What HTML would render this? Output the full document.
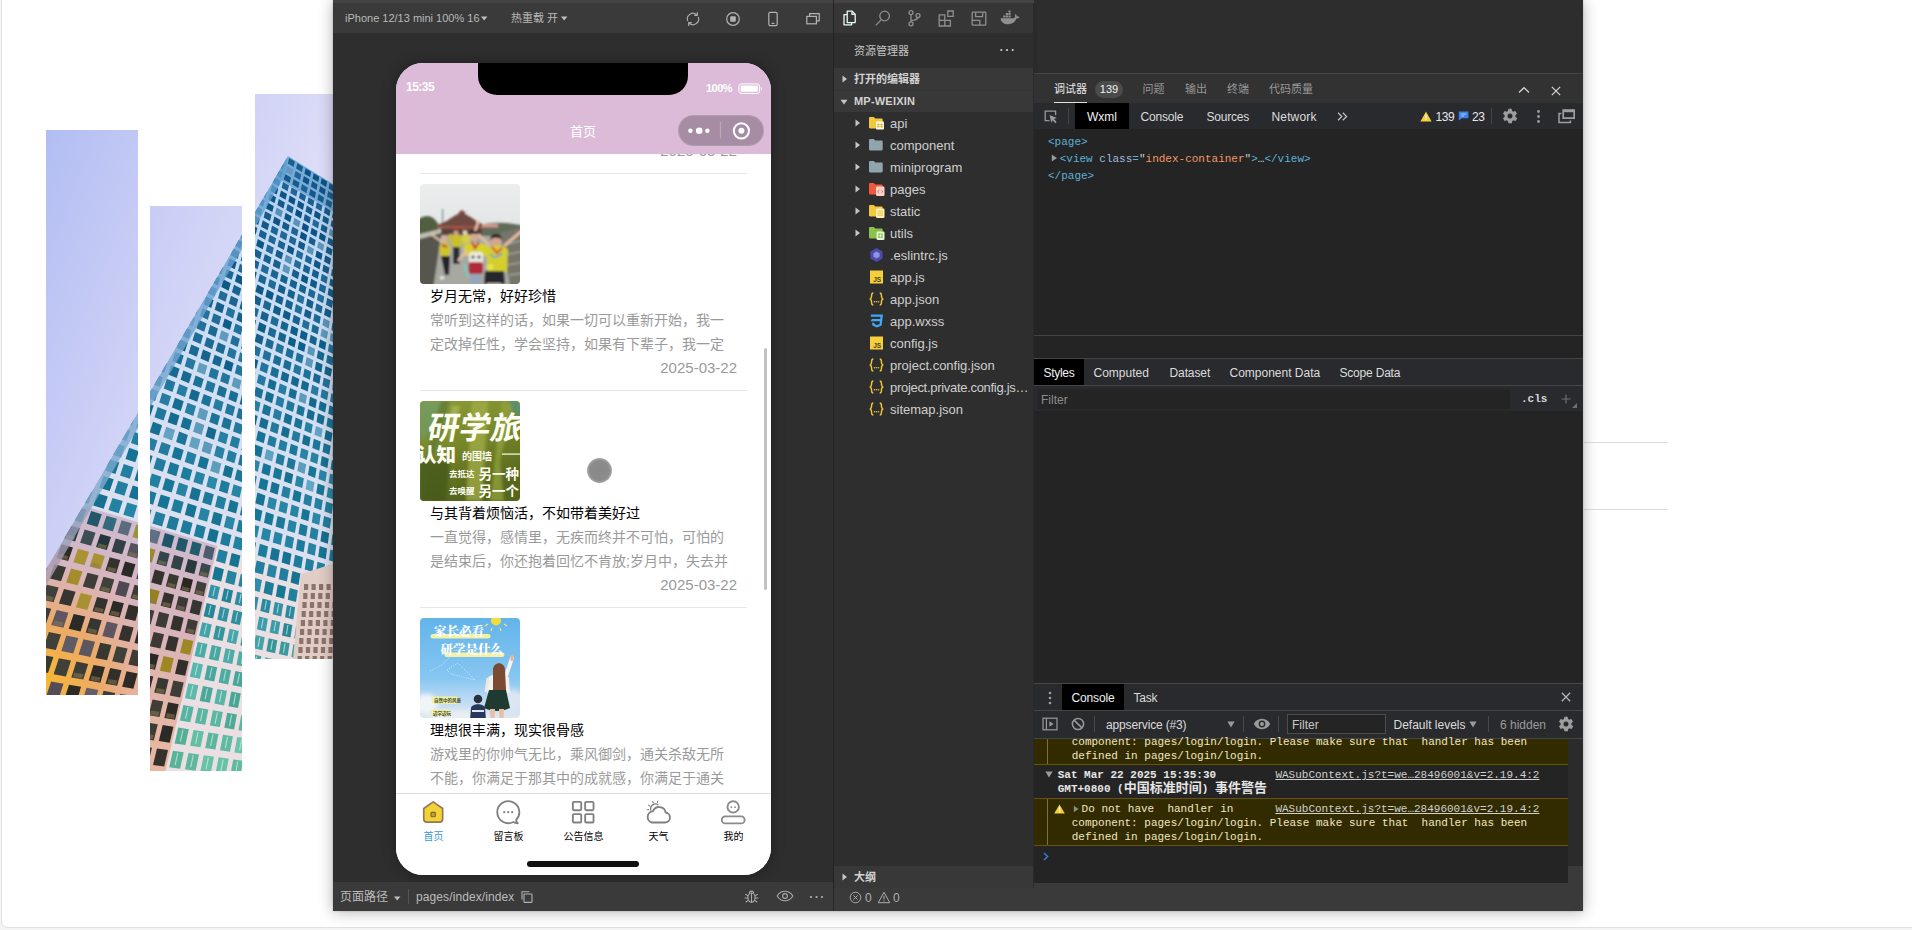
<!DOCTYPE html>
<html lang="zh-CN">
<head>
<meta charset="utf-8">
<title>微信开发者工具 - 首页</title>
<style>
*{box-sizing:border-box}
html,body{margin:0;padding:0}
body{width:1912px;height:930px;overflow:hidden;position:relative;background:#f4f4f4;font-family:"Liberation Sans","Noto Sans CJK SC",sans-serif;-webkit-font-smoothing:antialiased}
.abs{position:absolute}
#card{position:absolute;left:1px;top:-12px;width:1930px;height:940px;background:#fff;border:1px solid #e0e0e0;border-radius:7px}
#ide{position:absolute;left:333px;top:0;width:1250px;height:911px;background:#2e2e2e;box-shadow:0 1px 14px rgba(0,0,0,.3),0 0 2px rgba(0,0,0,.2);overflow:hidden;color:#ccc;font-size:12px}
.t{position:absolute;white-space:nowrap;line-height:1}
.ui{font-family:"Liberation Sans","Noto Sans CJK SC",sans-serif}
.mono{font-family:"Liberation Mono","Noto Sans CJK SC",monospace}
/* simulator */
#simbar{position:absolute;left:0;top:3px;width:500px;height:30px;background:#3a3a3a}
#simfoot{position:absolute;left:0;top:882px;width:500px;height:29px;background:#3a3a3a}
#phone{position:absolute;left:63px;top:63px;width:375px;height:812px;background:#fff;border-radius:27px;overflow:hidden;box-shadow:0 0 14px rgba(0,0,0,.35)}
#nav{position:absolute;left:0;top:0;width:375px;height:91px;background:#dcbbd9}
#notch{position:absolute;left:81.5px;top:0;width:210.5px;height:32px;background:#000;border-radius:0 0 19px 19px}
#list{position:absolute;left:0;top:91px;width:375px;height:640px;overflow:hidden}
.item{position:absolute;left:24px;width:327px;height:217px;border-bottom:1px solid #e6e6e6}
.item .pic{position:absolute;left:0;top:10px;width:100px;height:100px;border-radius:4px;overflow:hidden}
.item .tt{position:absolute;left:10px;top:110px;height:24px;line-height:24px;font-size:14px;color:#000;white-space:nowrap}
.item .ds{position:absolute;left:10px;top:134px;width:308px;line-height:24px;font-size:14px;color:#9a9a9a;white-space:nowrap}
.item .dt{position:absolute;right:10px;top:182px;height:24px;line-height:24px;font-size:15px;color:#9a9a9a;white-space:nowrap}
#tabbar{position:absolute;left:0;top:730px;width:375px;height:82px;background:#fff;border-top:1px solid #dcdcdc}
.tab{position:absolute;top:0;width:75px;height:60px;text-align:center}
.tab svg{position:absolute;left:24.300px;top:4.800px}
.tab span{position:absolute;left:0;width:75px;top:37px;font-size:10px;line-height:12px;color:#000}
/* side bar */
#side{position:absolute;left:500px;top:0;width:201px;height:911px;border-left:1px solid #232323}
.row{position:absolute;left:0;width:200px;height:22px}
.row .nm{position:absolute;left:56px;top:1px;line-height:22px;font-size:13px;color:#cfcfcf;white-space:nowrap}
.row .ar{position:absolute;left:20px;top:7px}
.row .ic{position:absolute;left:34px;top:3px}
/* devtools */
#dbg{position:absolute;left:701px;top:0;width:549px;height:911px;background:#2d2d2d}
.dt12{font-size:12px;color:#dcdcdc}
.sep{position:absolute;width:1px;background:#4a4a4a}
.hl{position:absolute;left:0;width:549px;height:1px;background:#474747}
</style>
</head>
<body>
<div id="card"></div>
<div class="abs" style="left:1584px;top:442px;width:84px;height:1px;background:#dedede"></div>
<div class="abs" style="left:1584px;top:509px;width:84px;height:1px;background:#dedede"></div>
<svg width="340" height="780" viewBox="0 0 340 780" style="position:absolute;left:0;top:0">
<defs>
<clipPath id="strips"><rect x="46" y="130" width="92" height="565"/><rect x="150" y="206" width="92" height="565"/><rect x="255" y="94" width="90" height="565"/></clipPath>
<clipPath id="bodyc"><path d="M288.0 156.0 L359.2 200.2 L345 193.1 L345 790 L-82.9 790 Z"/></clipPath>
<linearGradient id="sky" x1="0" y1="0" x2="1" y2="0.9"><stop offset="0" stop-color="#aebbf2"/><stop offset="0.35" stop-color="#cdd0f6"/><stop offset="0.7" stop-color="#e6e4f8"/><stop offset="1" stop-color="#efeef9"/></linearGradient>
<linearGradient id="frame" gradientUnits="userSpaceOnUse" x1="290" y1="160" x2="200" y2="560"><stop offset="0" stop-color="#a9cdee"/><stop offset="0.25" stop-color="#c6dcf4"/><stop offset="0.7" stop-color="#d6e0f2"/><stop offset="1" stop-color="#dfe0ee"/></linearGradient>
<linearGradient id="pink" gradientUnits="userSpaceOnUse" x1="150" y1="500" x2="90" y2="720"><stop offset="0" stop-color="#cbbdd4"/><stop offset="0.5" stop-color="#d8b4bc"/><stop offset="1" stop-color="#e8b7a2"/></linearGradient>
<radialGradient id="warm" gradientUnits="userSpaceOnUse" cx="40" cy="680" r="125"><stop offset="0" stop-color="#f8b82a"/><stop offset="0.5" stop-color="#efa85a" stop-opacity=".8"/><stop offset="1" stop-color="#e8b0a0" stop-opacity="0"/></radialGradient>
<linearGradient id="bandg" gradientUnits="userSpaceOnUse" x1="0" y1="160" x2="0" y2="700"><stop offset="0" stop-color="#5f9fd2"/><stop offset=".6" stop-color="#7fa9cf"/><stop offset=".75" stop-color="#a99bb0"/><stop offset="1" stop-color="#d9a47a"/></linearGradient><filter id="bblur" x="0" y="0" width="100%" height="100%"><feGaussianBlur stdDeviation=".55"/></filter>
</defs>
<g clip-path="url(#strips)"><g filter="url(#bblur)">
<rect x="40" y="90" width="300" height="690" fill="url(#sky)"/>
<g clip-path="url(#bodyc)">
<rect x="0" y="90" width="345" height="700" fill="url(#frame)"/>
<path d="M217.2 545.9 L377.4 594.0 L332.0 1110.2 L80.1 1142.5Z" fill="#eadfe3"/>
<path d="M-381.6 366.4 L217.2 545.9 L80.1 1142.5 L-1214.3 1308.1Z" fill="url(#pink)"/>
<path d="M-381.6 366.4 L217.2 545.9 L80.1 1142.5 L-1214.3 1308.1Z" fill="url(#warm)"/>
<path d="M262.4 140.1L409.3 231.3L407.1 255.8L255.1 164.8Z" fill="#4a8cc4" opacity=".55"/>
<path d="M280.7 152.8L286.5 156.4L285.1 161.8L279.3 158.2Z" fill="#14588a"/>
<path d="M289.1 158.0L294.9 161.6L293.6 167.0L287.8 163.4Z" fill="#1c6092"/>
<path d="M297.4 163.2L303.1 166.7L301.9 172.1L296.1 168.6Z" fill="#195d8f"/>
<path d="M305.6 168.3L311.2 171.7L310.1 177.1L304.4 173.7Z" fill="#0d5183"/>
<path d="M313.7 173.3L319.3 176.7L318.2 182.1L312.6 178.7Z" fill="#0d5183"/>
<path d="M321.7 178.2L327.2 181.6L326.1 187.0L320.6 183.6Z" fill="#0e5284"/>
<path d="M329.6 183.1L335.0 186.5L334.0 191.9L328.6 188.5Z" fill="#165a8c"/>
<path d="M337.4 188.0L342.8 191.3L341.8 196.7L336.5 193.4Z" fill="#0f5385"/>
<path d="M345.1 192.7L350.4 196.0L349.5 201.4L344.2 198.1Z" fill="#1b5f91"/>
<path d="M278.6 160.7L284.5 164.3L283.1 169.8L277.2 166.2Z" fill="#1a5e90"/>
<path d="M287.2 165.9L293.0 169.4L291.6 174.9L285.8 171.4Z" fill="#6298be"/>
<path d="M295.6 171.0L301.3 174.5L300.0 180.0L294.2 176.5Z" fill="#216597"/>
<path d="M303.9 176.1L309.5 179.6L308.3 185.1L302.6 181.6Z" fill="#0f5385"/>
<path d="M312.1 181.1L317.6 184.6L316.5 190.0L310.9 186.6Z" fill="#135789"/>
<path d="M320.1 186.1L325.7 189.5L324.6 195.0L319.0 191.6Z" fill="#105486"/>
<path d="M328.1 191.0L333.6 194.3L332.6 199.8L327.1 196.5Z" fill="#1b5f91"/>
<path d="M336.0 195.8L341.4 199.1L340.4 204.6L335.0 201.3Z" fill="#5e94ba"/>
<path d="M343.8 200.6L349.1 203.8L348.2 209.3L342.9 206.1Z" fill="#0d5183"/>
<path d="M276.5 168.7L282.5 172.3L281.0 177.9L275.0 174.3Z" fill="#1c6092"/>
<path d="M285.1 173.9L291.0 177.4L289.7 183.0L283.7 179.5Z" fill="#14588a"/>
<path d="M293.6 179.0L299.5 182.5L298.2 188.1L292.3 184.6Z" fill="#175b8d"/>
<path d="M302.0 184.1L307.8 187.6L306.5 193.2L300.8 189.7Z" fill="#1f6395"/>
<path d="M310.3 189.1L316.0 192.5L314.8 198.2L309.1 194.7Z" fill="#125688"/>
<path d="M318.5 194.1L324.1 197.4L323.0 203.1L317.4 199.7Z" fill="#195d8f"/>
<path d="M326.6 199.0L332.1 202.3L331.1 207.9L325.5 204.6Z" fill="#1e6294"/>
<path d="M334.6 203.8L340.0 207.1L339.0 212.7L333.5 209.4Z" fill="#24689a"/>
<path d="M342.4 208.5L347.8 211.8L346.9 217.4L341.5 214.1Z" fill="#165a8c"/>
<path d="M350.2 213.2L355.5 216.5L354.6 222.0L349.3 218.8Z" fill="#105486"/>
<path d="M274.3 176.8L280.4 180.4L278.9 186.2L272.8 182.5Z" fill="#0d5183"/>
<path d="M283.1 182.0L289.0 185.6L287.6 191.3L281.6 187.8Z" fill="#1e6294"/>
<path d="M291.7 187.2L297.6 190.7L296.2 196.4L290.3 192.9Z" fill="#216597"/>
<path d="M300.2 192.3L306.0 195.7L304.7 201.5L298.9 198.0Z" fill="#1d6193"/>
<path d="M308.6 197.3L314.3 200.7L313.1 206.4L307.3 203.0Z" fill="#1a5e90"/>
<path d="M316.8 202.2L322.5 205.6L321.4 211.3L315.7 207.9Z" fill="#206496"/>
<path d="M325.0 207.1L330.6 210.4L329.5 216.2L323.9 212.8Z" fill="#175b8d"/>
<path d="M333.1 211.9L338.6 215.2L337.6 220.9L332.0 217.6Z" fill="#0d5183"/>
<path d="M341.0 216.7L346.5 219.9L345.5 225.6L340.0 222.4Z" fill="#1c6092"/>
<path d="M348.9 221.4L354.2 224.6L353.4 230.3L348.0 227.1Z" fill="#206496"/>
<path d="M263.2 179.9L269.4 183.5L267.8 189.4L261.6 185.7Z" fill="#15598b"/>
<path d="M272.1 185.1L278.2 188.8L276.7 194.6L270.6 191.0Z" fill="#0d5183"/>
<path d="M281.0 190.4L287.0 193.9L285.6 199.8L279.5 196.2Z" fill="#105486"/>
<path d="M289.7 195.5L295.6 199.0L294.3 204.9L288.3 201.4Z" fill="#0d5183"/>
<path d="M298.3 200.6L304.2 204.1L302.9 209.9L297.0 206.4Z" fill="#0f5385"/>
<path d="M306.8 205.6L312.6 209.0L311.3 214.9L305.5 211.4Z" fill="#15598b"/>
<path d="M315.1 210.5L320.9 213.9L319.7 219.7L313.9 216.4Z" fill="#0e5284"/>
<path d="M323.4 215.4L329.0 218.7L328.0 224.6L322.3 221.3Z" fill="#195d8f"/>
<path d="M331.6 220.2L337.1 223.5L336.1 229.3L330.5 226.1Z" fill="#206496"/>
<path d="M339.6 225.0L345.1 228.2L344.1 234.0L338.6 230.8Z" fill="#135789"/>
<path d="M347.5 229.7L353.0 232.9L352.1 238.7L346.6 235.5Z" fill="#15598b"/>
<path d="M260.8 188.4L267.1 192.0L265.5 198.0L259.2 194.4Z" fill="#236799"/>
<path d="M269.9 193.7L276.1 197.3L274.5 203.2L268.3 199.6Z" fill="#105486"/>
<path d="M278.8 198.9L284.9 202.4L283.5 208.4L277.3 204.9Z" fill="#125688"/>
<path d="M287.6 204.0L293.7 207.5L292.3 213.5L286.2 210.0Z" fill="#1a5e90"/>
<path d="M296.4 209.1L302.3 212.5L301.0 218.5L295.0 215.1Z" fill="#0c5082"/>
<path d="M304.9 214.1L310.8 217.5L309.6 223.5L303.6 220.1Z" fill="#15598b"/>
<path d="M313.4 219.0L319.2 222.4L318.0 228.4L312.2 225.0Z" fill="#236799"/>
<path d="M321.8 223.9L327.5 227.2L326.4 233.2L320.6 229.9Z" fill="#185c8e"/>
<path d="M330.0 228.7L335.6 232.0L334.6 237.9L328.9 234.7Z" fill="#5f96bc"/>
<path d="M338.1 233.5L343.7 236.7L342.7 242.6L337.1 239.4Z" fill="#226798"/>
<path d="M346.2 238.1L351.7 241.3L350.7 247.3L345.2 244.1Z" fill="#216798"/>
<path d="M258.4 197.1L264.7 200.7L263.1 206.8L256.7 203.2Z" fill="#15598b"/>
<path d="M267.6 202.4L273.8 206.0L272.3 212.1L266.0 208.5Z" fill="#0e5284"/>
<path d="M276.6 207.6L282.8 211.1L281.3 217.2L275.1 213.7Z" fill="#5990b6"/>
<path d="M285.6 212.7L291.7 216.2L290.2 222.3L284.1 218.8Z" fill="#115587"/>
<path d="M294.4 217.8L300.4 221.2L299.0 227.3L293.0 223.9Z" fill="#5c92b8"/>
<path d="M303.1 222.8L309.0 226.2L307.7 232.3L301.7 228.9Z" fill="#0c5082"/>
<path d="M311.6 227.7L317.5 231.1L316.3 237.1L310.4 233.8Z" fill="#0e5385"/>
<path d="M320.1 232.6L325.9 235.9L324.7 242.0L318.9 238.6Z" fill="#0d5283"/>
<path d="M328.4 237.4L334.1 240.6L333.1 246.7L327.3 243.4Z" fill="#1b6091"/>
<path d="M336.7 242.1L342.3 245.3L341.3 251.4L335.6 248.2Z" fill="#125889"/>
<path d="M344.8 246.8L350.3 250.0L349.4 256.0L343.8 252.8Z" fill="#155b8c"/>
<path d="M255.9 206.0L262.4 209.6L260.7 215.9L254.2 212.2Z" fill="#206496"/>
<path d="M265.2 211.2L271.6 214.8L270.0 221.1L263.6 217.5Z" fill="#175b8d"/>
<path d="M274.4 216.4L280.6 220.0L279.1 226.2L272.8 222.7Z" fill="#0e5284"/>
<path d="M283.4 221.6L289.6 225.1L288.2 231.3L281.9 227.8Z" fill="#14588a"/>
<path d="M292.4 226.6L298.4 230.1L297.1 236.3L290.9 232.9Z" fill="#206496"/>
<path d="M301.1 231.6L307.1 235.0L305.9 241.2L299.8 237.8Z" fill="#0d5183"/>
<path d="M309.8 236.5L315.7 239.9L314.5 246.1L308.5 242.8Z" fill="#195e8f"/>
<path d="M318.4 241.4L324.2 244.7L323.1 250.9L317.2 247.6Z" fill="#5e95bb"/>
<path d="M326.8 246.2L332.6 249.5L331.5 255.6L325.7 252.4Z" fill="#195f90"/>
<path d="M335.1 250.9L340.8 254.1L339.8 260.3L334.1 257.1Z" fill="#216898"/>
<path d="M343.4 255.6L349.0 258.8L348.0 264.9L342.4 261.8Z" fill="#135a8a"/>
<path d="M243.8 209.7L250.4 213.4L248.6 219.8L242.0 216.1Z" fill="#105486"/>
<path d="M253.4 215.1L259.9 218.7L258.2 225.1L251.6 221.4Z" fill="#195d8f"/>
<path d="M262.8 220.3L269.2 223.9L267.6 230.3L261.1 226.7Z" fill="#14588a"/>
<path d="M272.1 225.5L278.4 229.1L276.9 235.4L270.5 231.9Z" fill="#1f6496"/>
<path d="M281.3 230.6L287.5 234.1L286.0 240.5L279.7 237.0Z" fill="#216597"/>
<path d="M290.3 235.7L296.4 239.1L295.0 245.5L288.8 242.1Z" fill="#206596"/>
<path d="M299.2 240.7L305.3 244.1L303.9 250.4L297.8 247.0Z" fill="#125788"/>
<path d="M308.0 245.6L314.0 248.9L312.7 255.3L306.7 251.9Z" fill="#5c93b9"/>
<path d="M316.6 250.4L322.5 253.7L321.4 260.1L315.4 256.8Z" fill="#0d5484"/>
<path d="M325.2 255.2L331.0 258.5L329.9 264.8L324.0 261.5Z" fill="#135a8a"/>
<path d="M333.6 259.9L339.3 263.1L338.3 269.4L332.5 266.2Z" fill="#246b9b"/>
<path d="M341.9 264.6L347.6 267.7L346.6 274.0L340.9 270.9Z" fill="#236c9b"/>
<path d="M350.1 269.2L355.7 272.3L354.8 278.6L349.2 275.5Z" fill="#246d9b"/>
<path d="M241.1 219.0L247.8 222.7L246.0 229.2L239.2 225.5Z" fill="#115587"/>
<path d="M250.8 224.3L257.4 228.0L255.7 234.5L249.0 230.9Z" fill="#115587"/>
<path d="M260.4 229.6L266.9 233.2L265.2 239.7L258.6 236.1Z" fill="#1b6091"/>
<path d="M269.8 234.8L276.2 238.3L274.6 244.8L268.1 241.3Z" fill="#206597"/>
<path d="M279.0 239.9L285.4 243.4L283.9 249.9L277.5 246.4Z" fill="#1c6293"/>
<path d="M288.2 244.9L294.4 248.4L293.0 254.9L286.7 251.4Z" fill="#0f5585"/>
<path d="M297.2 249.9L303.3 253.3L302.0 259.8L295.8 256.4Z" fill="#226999"/>
<path d="M306.1 254.8L312.1 258.2L310.9 264.6L304.8 261.3Z" fill="#1f6696"/>
<path d="M314.8 259.6L320.8 262.9L319.6 269.4L313.6 266.1Z" fill="#115988"/>
<path d="M323.5 264.4L329.4 267.7L328.3 274.1L322.3 270.9Z" fill="#155d8c"/>
<path d="M332.0 269.1L337.8 272.3L336.8 278.8L330.9 275.6Z" fill="#246d9c"/>
<path d="M340.4 273.7L346.2 276.9L345.2 283.3L339.4 280.2Z" fill="#17608e"/>
<path d="M348.7 278.3L354.4 281.4L353.5 287.9L347.8 284.8Z" fill="#1f6896"/>
<path d="M238.4 228.5L245.1 232.2L243.3 238.9L236.4 235.2Z" fill="#0f5485"/>
<path d="M248.2 233.8L254.9 237.5L253.1 244.2L246.3 240.5Z" fill="#226798"/>
<path d="M257.8 239.1L264.4 242.7L262.7 249.3L256.1 245.8Z" fill="#105586"/>
<path d="M267.4 244.3L273.9 247.8L272.2 254.5L265.7 250.9Z" fill="#246a9b"/>
<path d="M276.8 249.4L283.2 252.9L281.6 259.5L275.2 256.0Z" fill="#155c8c"/>
<path d="M286.0 254.4L292.3 257.8L290.9 264.5L284.5 261.1Z" fill="#5a92b7"/>
<path d="M295.2 259.4L301.4 262.7L300.0 269.4L293.7 266.0Z" fill="#246c9b"/>
<path d="M304.2 264.2L310.3 267.6L309.0 274.2L302.8 270.9Z" fill="#1a6291"/>
<path d="M313.0 269.1L319.1 272.3L317.8 279.0L311.7 275.7Z" fill="#17608f"/>
<path d="M321.8 273.8L327.7 277.1L326.6 283.7L320.6 280.4Z" fill="#216a99"/>
<path d="M330.4 278.5L336.3 281.7L335.2 288.3L329.3 285.1Z" fill="#135d8b"/>
<path d="M338.9 283.1L344.7 286.3L343.7 292.8L337.9 289.7Z" fill="#135d8b"/>
<path d="M347.3 287.7L353.0 290.8L352.1 297.3L346.3 294.2Z" fill="#145e8c"/>
<path d="M235.5 238.3L242.4 241.9L240.5 248.8L233.5 245.1Z" fill="#0f5586"/>
<path d="M245.5 243.6L252.2 247.2L250.4 254.0L243.6 250.4Z" fill="#155b8c"/>
<path d="M255.3 248.8L261.9 252.4L260.2 259.2L253.5 255.6Z" fill="#1b6191"/>
<path d="M264.9 254.0L271.5 257.5L269.8 264.3L263.2 260.8Z" fill="#175e8e"/>
<path d="M274.4 259.1L280.9 262.5L279.4 269.3L272.8 265.9Z" fill="#196090"/>
<path d="M283.8 264.1L290.2 267.5L288.7 274.3L282.3 270.9Z" fill="#5e96bb"/>
<path d="M293.1 269.0L299.4 272.4L298.0 279.2L291.6 275.8Z" fill="#18608f"/>
<path d="M302.2 273.9L308.4 277.2L307.1 284.0L300.8 280.7Z" fill="#0d5685"/>
<path d="M311.2 278.7L317.3 282.0L316.0 288.7L309.9 285.5Z" fill="#115b89"/>
<path d="M320.0 283.4L326.1 286.6L324.9 293.4L318.8 290.2Z" fill="#1f6997"/>
<path d="M328.8 288.1L334.7 291.3L333.6 298.0L327.6 294.8Z" fill="#15608d"/>
<path d="M337.4 292.7L343.2 295.8L342.2 302.5L336.3 299.4Z" fill="#1b6693"/>
<path d="M345.9 297.2L351.7 300.3L350.7 307.0L344.8 303.9Z" fill="#105c89"/>
<path d="M232.6 248.2L239.6 251.9L237.6 258.9L230.6 255.2Z" fill="#135989"/>
<path d="M242.7 253.5L249.6 257.1L247.7 264.1L240.7 260.5Z" fill="#1f6696"/>
<path d="M252.6 258.7L259.4 262.3L257.6 269.3L250.8 265.7Z" fill="#1a6291"/>
<path d="M262.4 263.9L269.1 267.4L267.4 274.4L260.7 270.9Z" fill="#236b9a"/>
<path d="M272.1 269.0L278.6 272.4L277.0 279.4L270.4 275.9Z" fill="#1c6493"/>
<path d="M281.6 274.0L288.0 277.4L286.5 284.3L280.0 280.9Z" fill="#196391"/>
<path d="M290.9 278.9L297.3 282.2L295.9 289.2L289.4 285.8Z" fill="#186290"/>
<path d="M300.2 283.7L306.5 287.0L305.1 294.0L298.7 290.7Z" fill="#196391"/>
<path d="M309.3 288.5L315.5 291.8L314.2 298.7L307.9 295.4Z" fill="#1e6996"/>
<path d="M318.2 293.2L324.3 296.5L323.1 303.3L317.0 300.1Z" fill="#246f9c"/>
<path d="M327.1 297.9L333.1 301.1L332.0 307.9L325.9 304.8Z" fill="#1b6794"/>
<path d="M335.8 302.5L341.7 305.6L340.7 312.5L334.7 309.3Z" fill="#226e9a"/>
<path d="M344.4 307.0L350.3 310.1L349.3 316.9L343.4 313.9Z" fill="#115d8a"/>
<path d="M219.2 253.0L226.4 256.8L224.3 263.9L217.1 260.2Z" fill="#0e5585"/>
<path d="M229.6 258.4L236.7 262.1L234.7 269.2L227.5 265.6Z" fill="#0f5686"/>
<path d="M239.9 263.7L246.8 267.3L244.9 274.5L237.9 270.9Z" fill="#206897"/>
<path d="M249.9 268.9L256.8 272.5L255.0 279.6L248.0 276.1Z" fill="#115988"/>
<path d="M259.9 274.0L266.6 277.5L264.9 284.7L258.1 281.2Z" fill="#1d6695"/>
<path d="M269.6 279.1L276.3 282.5L274.6 289.7L267.9 286.2Z" fill="#226c9a"/>
<path d="M279.3 284.1L285.8 287.5L284.3 294.6L277.6 291.2Z" fill="#135d8b"/>
<path d="M288.8 289.0L295.2 292.3L293.7 299.4L287.2 296.1Z" fill="#17628f"/>
<path d="M298.1 293.8L304.5 297.1L303.1 304.2L296.7 300.9Z" fill="#25719e"/>
<path d="M307.3 298.6L313.6 301.8L312.3 308.9L306.0 305.7Z" fill="#125d8a"/>
<path d="M316.4 303.3L322.6 306.5L321.4 313.5L315.1 310.3Z" fill="#1a6693"/>
<path d="M325.4 307.9L331.5 311.1L330.3 318.1L324.1 314.9Z" fill="#135f8b"/>
<path d="M334.2 312.5L340.2 315.6L339.1 322.6L333.0 319.5Z" fill="#619abe"/>
<path d="M342.9 317.0L348.8 320.0L347.8 327.0L341.8 324.0Z" fill="#1c6994"/>
<path d="M216.1 263.5L223.3 267.2L221.2 274.6L213.8 270.9Z" fill="#0d5585"/>
<path d="M226.6 268.9L233.8 272.5L231.7 279.8L224.4 276.2Z" fill="#1c6593"/>
<path d="M237.0 274.1L244.0 277.7L242.1 285.0L234.9 281.5Z" fill="#0f5886"/>
<path d="M247.2 279.3L254.1 282.9L252.3 290.2L245.2 286.6Z" fill="#206a98"/>
<path d="M257.2 284.4L264.1 287.9L262.3 295.2L255.4 291.7Z" fill="#105a88"/>
<path d="M267.1 289.5L273.9 292.9L272.2 300.2L265.4 296.8Z" fill="#0f5987"/>
<path d="M276.9 294.4L283.6 297.8L282.0 305.1L275.2 301.7Z" fill="#145f8c"/>
<path d="M286.5 299.3L293.1 302.6L291.6 309.9L285.0 306.6Z" fill="#186490"/>
<path d="M296.0 304.1L302.5 307.4L301.0 314.6L294.5 311.4Z" fill="#226e9a"/>
<path d="M305.3 308.9L311.7 312.1L310.3 319.3L303.9 316.1Z" fill="#125e8a"/>
<path d="M314.5 313.5L320.8 316.7L319.5 323.9L313.2 320.8Z" fill="#1c6995"/>
<path d="M323.6 318.1L329.8 321.3L328.6 328.5L322.4 325.3Z" fill="#5b95b8"/>
<path d="M332.5 322.7L338.6 325.8L337.5 333.0L331.4 329.9Z" fill="#1f6d98"/>
<path d="M341.3 327.2L347.3 330.2L346.3 337.4L340.3 334.3Z" fill="#105f89"/>
<path d="M350.0 331.6L355.9 334.6L355.0 341.7L349.0 338.7Z" fill="#1e6d97"/>
<path d="M212.8 274.2L220.2 277.9L217.9 285.4L210.5 281.8Z" fill="#0f5887"/>
<path d="M223.5 279.5L230.8 283.2L228.6 290.7L221.3 287.1Z" fill="#0f5987"/>
<path d="M234.0 284.8L241.2 288.4L239.1 295.9L231.9 292.3Z" fill="#186390"/>
<path d="M244.4 290.0L251.4 293.5L249.5 301.0L242.4 297.5Z" fill="#1b6693"/>
<path d="M254.6 295.1L261.5 298.5L259.7 306.0L252.7 302.5Z" fill="#145f8c"/>
<path d="M264.6 300.1L271.4 303.5L269.7 310.9L262.8 307.5Z" fill="#1a6693"/>
<path d="M274.5 305.0L281.2 308.4L279.6 315.8L272.8 312.5Z" fill="#115d89"/>
<path d="M284.2 309.9L290.9 313.2L289.3 320.6L282.6 317.3Z" fill="#0f5c88"/>
<path d="M293.8 314.7L300.4 317.9L298.9 325.3L292.3 322.1Z" fill="#16638f"/>
<path d="M303.3 319.4L309.7 322.6L308.4 330.0L301.9 326.8Z" fill="#216e9a"/>
<path d="M312.6 324.0L319.0 327.2L317.7 334.6L311.3 331.4Z" fill="#1a6994"/>
<path d="M321.8 328.6L328.1 331.7L326.8 339.1L320.5 336.0Z" fill="#5d98bb"/>
<path d="M330.8 333.1L337.0 336.2L335.9 343.5L329.7 340.5Z" fill="#5c97ba"/>
<path d="M339.8 337.6L345.8 340.6L344.8 347.9L338.7 344.9Z" fill="#20709a"/>
<path d="M348.6 342.0L354.5 345.0L353.6 352.3L347.5 349.3Z" fill="#13648d"/>
<path d="M209.4 285.2L216.9 288.9L214.6 296.6L207.1 292.9Z" fill="#246e9c"/>
<path d="M220.3 290.5L227.7 294.1L225.5 301.8L218.0 298.2Z" fill="#216c99"/>
<path d="M231.0 295.7L238.2 299.3L236.2 307.0L228.8 303.4Z" fill="#1a6592"/>
<path d="M241.5 300.9L248.6 304.4L246.7 312.1L239.4 308.6Z" fill="#176390"/>
<path d="M251.8 305.9L258.9 309.4L257.0 317.1L249.9 313.6Z" fill="#1e6b97"/>
<path d="M262.0 310.9L268.9 314.3L267.2 322.0L260.2 318.6Z" fill="#16638f"/>
<path d="M272.0 315.8L278.9 319.2L277.2 326.8L270.3 323.5Z" fill="#1f6d98"/>
<path d="M281.9 320.7L288.6 324.0L287.0 331.6L280.3 328.3Z" fill="#186691"/>
<path d="M291.6 325.5L298.3 328.7L296.8 336.3L290.1 333.0Z" fill="#105e89"/>
<path d="M301.2 330.1L307.7 333.3L306.3 340.9L299.7 337.7Z" fill="#105f8a"/>
<path d="M310.7 334.8L317.1 337.9L315.8 345.5L309.3 342.3Z" fill="#15648e"/>
<path d="M320.0 339.3L326.3 342.4L325.1 349.9L318.7 346.9Z" fill="#11618a"/>
<path d="M329.1 343.8L335.4 346.9L334.2 354.4L327.9 351.3Z" fill="#24749e"/>
<path d="M338.1 348.2L344.3 351.2L343.2 358.7L337.0 355.7Z" fill="#166790"/>
<path d="M347.0 352.6L353.1 355.6L352.1 363.0L346.0 360.1Z" fill="#166790"/>
<path d="M206.0 296.4L213.6 300.1L211.3 308.0L203.6 304.4Z" fill="#125d8a"/>
<path d="M217.0 301.7L224.5 305.3L222.3 313.2L214.7 309.7Z" fill="#14608d"/>
<path d="M227.8 306.9L235.2 310.5L233.1 318.4L225.6 314.8Z" fill="#25729e"/>
<path d="M238.5 312.1L245.8 315.5L243.7 323.4L236.4 319.9Z" fill="#14618d"/>
<path d="M249.0 317.1L256.1 320.5L254.2 328.4L247.0 325.0Z" fill="#16638f"/>
<path d="M259.3 322.1L266.4 325.4L264.5 333.3L257.4 329.9Z" fill="#0e5d87"/>
<path d="M269.5 326.9L276.4 330.3L274.7 338.1L267.7 334.8Z" fill="#1a6993"/>
<path d="M279.5 331.8L286.3 335.0L284.7 342.8L277.8 339.6Z" fill="#13638d"/>
<path d="M289.4 336.5L296.1 339.7L294.6 347.5L287.8 344.3Z" fill="#0f5e88"/>
<path d="M299.1 341.2L305.7 344.3L304.3 352.1L297.6 348.9Z" fill="#11618b"/>
<path d="M308.6 345.8L315.2 348.9L313.8 356.6L307.2 353.5Z" fill="#5a96b8"/>
<path d="M318.1 350.3L324.5 353.4L323.2 361.1L316.7 358.0Z" fill="#166790"/>
<path d="M327.4 354.7L333.7 357.8L332.5 365.4L326.1 362.4Z" fill="#1d6f97"/>
<path d="M336.5 359.1L342.7 362.1L341.6 369.8L335.3 366.8Z" fill="#21739c"/>
<path d="M345.5 363.5L351.7 366.4L350.6 374.0L344.4 371.1Z" fill="#21739b"/>
<path d="M191.1 302.6L199.0 306.3L196.4 314.5L188.5 310.8Z" fill="#176390"/>
<path d="M202.5 308.0L210.2 311.6L207.8 319.8L200.0 316.1Z" fill="#26729e"/>
<path d="M213.6 313.3L221.3 316.8L219.0 324.9L211.3 321.4Z" fill="#206d98"/>
<path d="M224.6 318.4L232.1 321.9L230.0 330.0L222.4 326.5Z" fill="#0f5d88"/>
<path d="M235.5 323.5L242.8 327.0L240.8 335.0L233.3 331.6Z" fill="#24729d"/>
<path d="M246.1 328.5L253.4 331.9L251.4 340.0L244.1 336.6Z" fill="#206f99"/>
<path d="M256.6 333.5L263.7 336.8L261.9 344.8L254.7 341.5Z" fill="#12618b"/>
<path d="M266.9 338.3L273.9 341.6L272.2 349.6L265.1 346.3Z" fill="#1b6b94"/>
<path d="M277.1 343.1L284.0 346.3L282.3 354.3L275.3 351.1Z" fill="#22739c"/>
<path d="M287.1 347.8L293.9 351.0L292.3 358.9L285.4 355.8Z" fill="#1d6e97"/>
<path d="M296.9 352.4L303.6 355.6L302.1 363.5L295.4 360.4Z" fill="#1f719a"/>
<path d="M306.6 357.0L313.2 360.1L311.8 368.0L305.2 364.9Z" fill="#5c98ba"/>
<path d="M316.1 361.5L322.6 364.5L321.4 372.4L314.8 369.4Z" fill="#12658d"/>
<path d="M325.5 365.9L332.0 368.9L330.7 376.8L324.3 373.8Z" fill="#12658c"/>
<path d="M334.8 370.3L341.1 373.2L340.0 381.1L333.6 378.1Z" fill="#1d7098"/>
<path d="M343.9 374.6L350.2 377.5L349.1 385.3L342.8 382.4Z" fill="#1f7299"/>
<path d="M187.3 314.5L195.3 318.2L192.7 326.5L184.6 322.9Z" fill="#5e98bc"/>
<path d="M198.8 319.8L206.7 323.4L204.2 331.8L196.3 328.2Z" fill="#216f9b"/>
<path d="M210.2 325.1L217.9 328.6L215.6 336.9L207.8 333.4Z" fill="#1a6994"/>
<path d="M221.4 330.2L229.0 333.7L226.7 342.0L219.1 338.5Z" fill="#609bbe"/>
<path d="M232.4 335.3L239.8 338.7L237.7 347.0L230.2 343.5Z" fill="#20709a"/>
<path d="M243.2 340.2L250.5 343.6L248.5 351.9L241.1 348.5Z" fill="#11618a"/>
<path d="M253.8 345.1L261.0 348.5L259.1 356.7L251.8 353.4Z" fill="#20719a"/>
<path d="M264.3 350.0L271.4 353.2L269.6 361.4L262.4 358.2Z" fill="#21729b"/>
<path d="M274.6 354.7L281.6 357.9L279.9 366.1L272.8 362.9Z" fill="#1b6d95"/>
<path d="M284.7 359.4L291.6 362.6L290.0 370.7L283.0 367.5Z" fill="#1b6d95"/>
<path d="M294.7 364.0L301.5 367.1L300.0 375.2L293.1 372.1Z" fill="#22749c"/>
<path d="M304.5 368.5L311.2 371.6L309.8 379.7L303.0 376.6Z" fill="#1f7299"/>
<path d="M314.2 373.0L320.8 376.0L319.4 384.1L312.8 381.0Z" fill="#13678e"/>
<path d="M323.7 377.4L330.2 380.3L329.0 388.4L322.4 385.4Z" fill="#22759c"/>
<path d="M333.1 381.7L339.5 384.6L338.3 392.6L331.9 389.7Z" fill="#609cbe"/>
<path d="M342.3 385.9L348.6 388.8L347.6 396.8L341.2 393.9Z" fill="#11668c"/>
<path d="M183.4 326.7L191.5 330.3L188.9 338.9L180.7 335.3Z" fill="#1f6d98"/>
<path d="M195.1 332.0L203.1 335.6L200.6 344.1L192.5 340.5Z" fill="#1f6e98"/>
<path d="M206.7 337.2L214.5 340.7L212.1 349.2L204.2 345.7Z" fill="#1b6b95"/>
<path d="M218.0 342.3L225.7 345.8L223.4 354.3L215.6 350.8Z" fill="#1a6a94"/>
<path d="M229.2 347.3L236.7 350.7L234.6 359.2L226.9 355.8Z" fill="#24759e"/>
<path d="M240.1 352.2L247.6 355.6L245.5 364.1L238.0 360.7Z" fill="#2778a1"/>
<path d="M250.9 357.1L258.3 360.4L256.3 368.8L248.9 365.5Z" fill="#10618a"/>
<path d="M261.5 361.9L268.8 365.2L266.9 373.5L259.6 370.3Z" fill="#23759d"/>
<path d="M272.0 366.6L279.1 369.8L277.4 378.2L270.2 375.0Z" fill="#1a6d95"/>
<path d="M282.3 371.2L289.3 374.4L287.6 382.7L280.6 379.6Z" fill="#15688f"/>
<path d="M292.4 375.8L299.3 378.9L297.7 387.2L290.8 384.1Z" fill="#156890"/>
<path d="M302.3 380.3L309.1 383.3L307.7 391.6L300.8 388.6Z" fill="#13678e"/>
<path d="M312.2 384.7L318.8 387.7L317.5 396.0L310.7 393.0Z" fill="#277ba2"/>
<path d="M321.8 389.1L328.4 392.0L327.1 400.2L320.5 397.3Z" fill="#24799f"/>
<path d="M331.3 393.3L337.8 396.3L336.6 404.5L330.1 401.6Z" fill="#257ba1"/>
<path d="M340.7 397.6L347.1 400.4L346.0 408.6L339.5 405.8Z" fill="#166c91"/>
<path d="M349.9 401.7L356.2 404.6L355.2 412.7L348.8 409.9Z" fill="#5f9dbe"/>
<path d="M179.4 339.2L187.7 342.8L184.9 351.6L176.6 348.0Z" fill="#0f5f89"/>
<path d="M191.3 344.4L199.4 348.0L196.8 356.8L188.6 353.2Z" fill="#1a6a94"/>
<path d="M203.0 349.6L211.0 353.1L208.5 361.9L200.5 358.4Z" fill="#12638c"/>
<path d="M214.6 354.7L222.4 358.1L220.0 366.8L212.1 363.4Z" fill="#176891"/>
<path d="M225.9 359.7L233.6 363.1L231.4 371.7L223.6 368.4Z" fill="#0f618a"/>
<path d="M237.0 364.6L244.6 367.9L242.5 376.6L234.8 373.2Z" fill="#24769e"/>
<path d="M248.0 369.4L255.4 372.7L253.4 381.3L245.9 378.0Z" fill="#2679a0"/>
<path d="M258.7 374.1L266.1 377.4L264.2 386.0L256.8 382.8Z" fill="#2579a0"/>
<path d="M269.3 378.8L276.6 382.0L274.8 390.5L267.5 387.4Z" fill="#196d94"/>
<path d="M279.8 383.4L286.9 386.5L285.2 395.1L278.0 392.0Z" fill="#287ca3"/>
<path d="M290.0 387.9L297.0 391.0L295.4 399.5L288.4 396.4Z" fill="#196e94"/>
<path d="M300.1 392.4L307.0 395.4L305.5 403.9L298.6 400.9Z" fill="#5d9abb"/>
<path d="M310.1 396.7L316.9 399.7L315.5 408.2L308.6 405.2Z" fill="#13698e"/>
<path d="M319.9 401.0L326.5 404.0L325.2 412.4L318.5 409.5Z" fill="#176d93"/>
<path d="M329.5 405.3L336.1 408.2L334.9 416.6L328.2 413.7Z" fill="#166d92"/>
<path d="M339.0 409.5L345.5 412.3L344.3 420.7L337.8 417.9Z" fill="#1d7499"/>
<path d="M348.4 413.6L354.7 416.4L353.7 424.7L347.3 421.9Z" fill="#1a7196"/>
<path d="M163.0 346.7L171.5 350.4L168.6 359.5L159.9 355.8Z" fill="#24759e"/>
<path d="M175.3 352.0L183.7 355.6L180.9 364.7L172.4 361.1Z" fill="#1e7098"/>
<path d="M187.4 357.2L195.7 360.8L193.0 369.8L184.7 366.3Z" fill="#2678a0"/>
<path d="M199.3 362.4L207.4 365.8L204.9 374.8L196.7 371.4Z" fill="#619dbf"/>
<path d="M211.0 367.4L219.0 370.8L216.6 379.8L208.5 376.4Z" fill="#21749c"/>
<path d="M222.5 372.3L230.3 375.7L228.1 384.6L220.2 381.3Z" fill="#22759c"/>
<path d="M233.8 377.2L241.5 380.5L239.4 389.4L231.6 386.1Z" fill="#5d9abb"/>
<path d="M245.0 382.0L252.5 385.2L250.5 394.1L242.8 390.9Z" fill="#267aa1"/>
<path d="M255.9 386.7L263.3 389.9L261.4 398.7L253.9 395.5Z" fill="#1b7096"/>
<path d="M266.6 391.3L274.0 394.4L272.1 403.2L264.7 400.1Z" fill="#176d93"/>
<path d="M277.2 395.8L284.4 398.9L282.7 407.7L275.4 404.6Z" fill="#287da3"/>
<path d="M287.6 400.3L294.7 403.4L293.1 412.1L285.9 409.1Z" fill="#20769c"/>
<path d="M297.9 404.7L304.9 407.7L303.3 416.4L296.3 413.4Z" fill="#1e7499"/>
<path d="M308.0 409.1L314.8 412.0L313.4 420.7L306.5 417.7Z" fill="#146c90"/>
<path d="M317.9 413.3L324.7 416.2L323.3 424.9L316.5 422.0Z" fill="#166d92"/>
<path d="M327.7 417.5L334.3 420.4L333.1 429.0L326.4 426.1Z" fill="#1d7599"/>
<path d="M337.3 421.7L343.8 424.5L342.7 433.0L336.1 430.2Z" fill="#267fa3"/>
<path d="M346.8 425.7L353.2 428.5L352.1 437.0L345.6 434.3Z" fill="#1c7598"/>
<path d="M158.6 360.0L167.2 363.6L164.2 372.9L155.4 369.3Z" fill="#14668e"/>
<path d="M171.1 365.2L179.6 368.8L176.7 378.1L168.1 374.6Z" fill="#186a92"/>
<path d="M183.4 370.4L191.8 373.9L189.0 383.2L180.6 379.7Z" fill="#156990"/>
<path d="M195.5 375.5L203.7 378.9L201.1 388.1L192.8 384.7Z" fill="#1d7198"/>
<path d="M207.4 380.4L215.5 383.8L213.0 393.0L204.8 389.7Z" fill="#22769d"/>
<path d="M219.1 385.3L227.0 388.7L224.7 397.8L216.6 394.5Z" fill="#1a6f95"/>
<path d="M230.6 390.2L238.4 393.4L236.1 402.6L228.3 399.3Z" fill="#196e94"/>
<path d="M241.9 394.9L249.5 398.1L247.4 407.2L239.7 404.0Z" fill="#12678d"/>
<path d="M253.0 399.5L260.5 402.7L258.5 411.8L250.9 408.6Z" fill="#277ea3"/>
<path d="M263.9 404.1L271.3 407.2L269.4 416.3L261.9 413.2Z" fill="#1c7398"/>
<path d="M274.6 408.6L281.9 411.7L280.2 420.7L272.8 417.6Z" fill="#257ca1"/>
<path d="M285.2 413.1L292.4 416.1L290.7 425.0L283.4 422.0Z" fill="#176f93"/>
<path d="M295.6 417.4L302.6 420.4L301.1 429.3L293.9 426.3Z" fill="#1a7296"/>
<path d="M305.8 421.7L312.8 424.6L311.3 433.5L304.3 430.6Z" fill="#2880a4"/>
<path d="M315.9 425.9L322.7 428.8L321.3 437.6L314.4 434.8Z" fill="#63a2c2"/>
<path d="M325.8 430.1L332.5 432.9L331.2 441.7L324.4 438.9Z" fill="#126b8e"/>
<path d="M335.5 434.1L342.2 436.9L341.0 445.7L334.3 442.9Z" fill="#2780a3"/>
<path d="M345.1 438.2L351.7 440.9L350.6 449.6L344.0 446.9Z" fill="#60a0bf"/>
<path d="M154.0 373.6L162.8 377.2L159.7 386.8L150.8 383.2Z" fill="#196d94"/>
<path d="M166.8 378.8L175.4 382.3L172.5 391.9L163.7 388.4Z" fill="#24789f"/>
<path d="M179.3 383.9L187.8 387.4L185.0 396.9L176.4 393.4Z" fill="#277ca2"/>
<path d="M191.6 388.9L199.9 392.3L197.3 401.8L188.8 398.4Z" fill="#13688e"/>
<path d="M203.7 393.9L211.9 397.2L209.3 406.7L201.0 403.3Z" fill="#1d7298"/>
<path d="M215.5 398.7L223.6 402.0L221.2 411.4L213.0 408.1Z" fill="#277da2"/>
<path d="M227.2 403.5L235.1 406.7L232.9 416.1L224.8 412.9Z" fill="#20779c"/>
<path d="M238.7 408.1L246.5 411.3L244.3 420.7L236.4 417.5Z" fill="#1b7397"/>
<path d="M249.9 412.8L257.6 415.9L255.6 425.2L247.8 422.1Z" fill="#11698e"/>
<path d="M261.0 417.3L268.6 420.4L266.6 429.6L259.0 426.6Z" fill="#166e92"/>
<path d="M271.9 421.7L279.3 424.8L277.5 434.0L270.0 431.0Z" fill="#20799d"/>
<path d="M282.7 426.1L289.9 429.1L288.2 438.3L280.9 435.3Z" fill="#146d90"/>
<path d="M293.2 430.4L300.4 433.3L298.8 442.5L291.5 439.6Z" fill="#207a9d"/>
<path d="M303.6 434.6L310.6 437.5L309.1 446.6L302.0 443.8Z" fill="#146e90"/>
<path d="M313.8 438.8L320.7 441.6L319.3 450.7L312.3 447.9Z" fill="#1e789b"/>
<path d="M323.8 442.9L330.7 445.7L329.4 454.7L322.5 452.0Z" fill="#1b7598"/>
<path d="M333.7 446.9L340.4 449.7L339.2 458.7L332.4 455.9Z" fill="#61a0c0"/>
<path d="M343.4 450.9L350.1 453.6L348.9 462.6L342.3 459.9Z" fill="#197496"/>
<path d="M149.3 387.6L158.3 391.2L155.1 401.0L146.0 397.5Z" fill="#277ca2"/>
<path d="M162.3 392.7L171.1 396.2L168.1 406.1L159.2 402.6Z" fill="#257ba1"/>
<path d="M175.0 397.8L183.7 401.2L180.8 411.0L172.0 407.6Z" fill="#166c91"/>
<path d="M187.5 402.8L196.0 406.1L193.3 415.9L184.7 412.5Z" fill="#277ea3"/>
<path d="M199.8 407.6L208.2 411.0L205.6 420.7L197.1 417.4Z" fill="#5e9bbc"/>
<path d="M211.9 412.4L220.1 415.7L217.6 425.3L209.3 422.1Z" fill="#1c7499"/>
<path d="M223.8 417.1L231.8 420.3L229.5 430.0L221.3 426.8Z" fill="#1b7397"/>
<path d="M235.4 421.8L243.3 424.9L241.1 434.5L233.1 431.4Z" fill="#21799d"/>
<path d="M246.9 426.3L254.6 429.4L252.6 438.9L244.7 435.9Z" fill="#5d9cbc"/>
<path d="M258.1 430.8L265.8 433.8L263.8 443.3L256.1 440.3Z" fill="#197396"/>
<path d="M269.2 435.2L276.7 438.2L274.9 447.6L267.2 444.6Z" fill="#217b9e"/>
<path d="M280.1 439.5L287.5 442.4L285.7 451.8L278.2 448.9Z" fill="#247fa1"/>
<path d="M290.8 443.7L298.0 446.6L296.4 456.0L289.1 453.1Z" fill="#1d789a"/>
<path d="M301.3 447.9L308.5 450.8L306.9 460.1L299.7 457.3Z" fill="#2984a6"/>
<path d="M311.6 452.0L318.7 454.8L317.3 464.1L310.1 461.3Z" fill="#2581a2"/>
<path d="M321.8 456.1L328.8 458.8L327.4 468.1L320.4 465.3Z" fill="#177394"/>
<path d="M331.9 460.0L338.7 462.8L337.4 472.0L330.5 469.3Z" fill="#197596"/>
<path d="M341.7 464.0L348.4 466.6L347.3 475.8L340.5 473.2Z" fill="#1e7b9b"/>
<path d="M144.5 402.0L153.7 405.5L150.4 415.7L141.1 412.2Z" fill="#166c91"/>
<path d="M157.7 407.1L166.7 410.5L163.6 420.6L154.5 417.2Z" fill="#20789c"/>
<path d="M170.7 412.1L179.5 415.5L176.5 425.5L167.6 422.2Z" fill="#146c90"/>
<path d="M183.4 417.0L192.0 420.3L189.2 430.3L180.5 427.0Z" fill="#166e92"/>
<path d="M195.9 421.8L204.4 425.1L201.7 435.0L193.1 431.8Z" fill="#5c9bbb"/>
<path d="M208.2 426.5L216.5 429.7L214.0 439.7L205.5 436.5Z" fill="#126b8f"/>
<path d="M220.2 431.2L228.4 434.3L226.0 444.2L217.7 441.1Z" fill="#2780a3"/>
<path d="M232.1 435.7L240.1 438.8L237.8 448.7L229.7 445.6Z" fill="#237d9f"/>
<path d="M243.7 440.2L251.6 443.3L249.4 453.1L241.4 450.0Z" fill="#2882a4"/>
<path d="M255.1 444.6L262.9 447.6L260.9 457.4L253.0 454.4Z" fill="#167193"/>
<path d="M266.4 449.0L274.0 451.9L272.1 461.6L264.4 458.7Z" fill="#62a2c1"/>
<path d="M277.4 453.2L284.9 456.1L283.1 465.8L275.5 462.9Z" fill="#217d9f"/>
<path d="M288.3 457.4L295.7 460.3L294.0 469.9L286.5 467.1Z" fill="#1b7798"/>
<path d="M299.0 461.5L306.2 464.3L304.6 473.9L297.3 471.1Z" fill="#5d9dbc"/>
<path d="M309.5 465.6L316.6 468.3L315.1 477.9L307.9 475.1Z" fill="#197696"/>
<path d="M319.8 469.6L326.8 472.3L325.5 481.8L318.4 479.1Z" fill="#2986a7"/>
<path d="M330.0 473.5L336.9 476.1L335.6 485.6L328.6 483.0Z" fill="#2987a7"/>
<path d="M340.0 477.3L346.8 480.0L345.6 489.4L338.7 486.8Z" fill="#1b7999"/>
<path d="M349.8 481.1L356.5 483.7L355.4 493.1L348.7 490.5Z" fill="#2684a4"/>
<path d="M125.9 411.7L135.4 415.2L131.8 425.7L122.2 422.2Z" fill="#12698e"/>
<path d="M139.6 416.8L148.9 420.3L145.5 430.7L136.1 427.3Z" fill="#1a7296"/>
<path d="M153.0 421.8L162.1 425.2L158.9 435.6L149.7 432.3Z" fill="#156e92"/>
<path d="M166.2 426.8L175.1 430.1L172.1 440.5L163.0 437.1Z" fill="#63a2c2"/>
<path d="M179.1 431.6L187.9 434.9L185.0 445.2L176.1 441.9Z" fill="#1b7598"/>
<path d="M191.8 436.4L200.5 439.6L197.7 449.8L189.0 446.6Z" fill="#62a1c1"/>
<path d="M204.3 441.0L212.8 444.2L210.2 454.4L201.6 451.3Z" fill="#5b9aba"/>
<path d="M216.6 445.6L224.9 448.7L222.4 458.9L214.0 455.8Z" fill="#2783a5"/>
<path d="M228.6 450.1L236.8 453.2L234.4 463.3L226.2 460.2Z" fill="#237fa1"/>
<path d="M240.4 454.5L248.5 457.5L246.3 467.6L238.1 464.6Z" fill="#1a7697"/>
<path d="M252.0 458.9L259.9 461.8L257.9 471.8L249.9 468.9Z" fill="#2985a6"/>
<path d="M263.5 463.1L271.2 466.0L269.3 476.0L261.4 473.1Z" fill="#187596"/>
<path d="M274.7 467.3L282.3 470.2L280.5 480.1L272.8 477.3Z" fill="#197797"/>
<path d="M285.7 471.4L293.2 474.3L291.5 484.1L283.9 481.3Z" fill="#127090"/>
<path d="M296.6 475.5L303.9 478.3L302.3 488.1L294.9 485.4Z" fill="#2886a6"/>
<path d="M307.2 479.5L314.5 482.2L313.0 492.0L305.6 489.3Z" fill="#64a5c4"/>
<path d="M317.7 483.4L324.8 486.1L323.4 495.8L316.2 493.2Z" fill="#187696"/>
<path d="M328.0 487.3L335.0 489.9L333.7 499.6L326.6 497.0Z" fill="#2987a7"/>
<path d="M338.2 491.1L345.1 493.6L343.8 503.3L336.9 500.7Z" fill="#1b7999"/>
<path d="M348.1 494.8L354.9 497.3L353.8 506.9L347.0 504.4Z" fill="#1c7a9a"/>
<path d="M120.5 427.0L130.2 430.5L126.5 441.3L116.7 437.9Z" fill="#2780a4"/>
<path d="M134.5 432.1L143.9 435.5L140.5 446.3L130.9 442.9Z" fill="#247ea1"/>
<path d="M148.2 437.0L157.4 440.4L154.1 451.1L144.7 447.8Z" fill="#257fa2"/>
<path d="M161.6 441.9L170.7 445.2L167.5 455.8L158.3 452.6Z" fill="#207b9d"/>
<path d="M174.7 446.7L183.7 449.9L180.7 460.5L171.6 457.3Z" fill="#197496"/>
<path d="M187.7 451.3L196.5 454.5L193.6 465.1L184.7 461.9Z" fill="#2480a2"/>
<path d="M200.4 455.9L209.0 459.0L206.3 469.5L197.6 466.5Z" fill="#167394"/>
<path d="M212.8 460.4L221.3 463.5L218.8 473.9L210.2 470.9Z" fill="#5d9ebd"/>
<path d="M225.1 464.9L233.4 467.9L231.0 478.3L222.6 475.3Z" fill="#137090"/>
<path d="M237.1 469.2L245.3 472.2L243.0 482.5L234.7 479.6Z" fill="#1a7798"/>
<path d="M248.9 473.5L256.9 476.4L254.8 486.7L246.7 483.8Z" fill="#2785a5"/>
<path d="M260.5 477.7L268.4 480.5L266.4 490.8L258.4 487.9Z" fill="#187696"/>
<path d="M271.9 481.8L279.6 484.6L277.7 494.8L269.9 492.0Z" fill="#147292"/>
<path d="M283.1 485.9L290.7 488.6L288.9 498.7L281.2 496.0Z" fill="#2381a1"/>
<path d="M294.1 489.8L301.6 492.5L299.9 502.6L292.3 500.0Z" fill="#187696"/>
<path d="M304.9 493.8L312.3 496.4L310.7 506.4L303.3 503.8Z" fill="#217f9f"/>
<path d="M315.5 497.6L322.8 500.2L321.3 510.2L314.0 507.6Z" fill="#2482a2"/>
<path d="M326.0 501.4L333.1 504.0L331.8 513.9L324.6 511.4Z" fill="#2280a0"/>
<path d="M336.3 505.1L343.3 507.6L342.1 517.5L335.0 515.0Z" fill="#2684a4"/>
<path d="M346.4 508.8L353.3 511.3L352.2 521.1L345.2 518.6Z" fill="#207e9e"/>
<path d="M115.0 442.8L124.8 446.3L121.1 457.4L111.1 454.0Z" fill="#237ea0"/>
<path d="M129.2 447.8L138.9 451.2L135.3 462.3L125.5 458.9Z" fill="#177395"/>
<path d="M143.2 452.7L152.6 456.0L149.2 467.0L139.6 463.7Z" fill="#157193"/>
<path d="M156.8 457.4L166.1 460.7L162.9 471.7L153.5 468.5Z" fill="#207c9d"/>
<path d="M170.2 462.1L179.3 465.3L176.3 476.2L167.0 473.1Z" fill="#1b7899"/>
<path d="M183.4 466.7L192.3 469.9L189.4 480.7L180.4 477.6Z" fill="#1e7b9c"/>
<path d="M196.3 471.3L205.1 474.3L202.3 485.1L193.4 482.1Z" fill="#2583a3"/>
<path d="M209.0 475.7L217.6 478.7L215.0 489.4L206.3 486.5Z" fill="#2a88a8"/>
<path d="M221.4 480.0L229.9 483.0L227.4 493.7L218.9 490.8Z" fill="#1d7b9b"/>
<path d="M233.6 484.3L241.9 487.2L239.6 497.8L231.2 495.0Z" fill="#2684a4"/>
<path d="M245.6 488.5L253.8 491.4L251.6 501.9L243.3 499.1Z" fill="#137191"/>
<path d="M257.4 492.6L265.4 495.4L263.4 505.9L255.3 503.2Z" fill="#157393"/>
<path d="M269.0 496.7L276.9 499.4L274.9 509.9L267.0 507.2Z" fill="#2987a7"/>
<path d="M280.4 500.7L288.1 503.4L286.3 513.8L278.5 511.1Z" fill="#2886a6"/>
<path d="M291.6 504.6L299.2 507.2L297.5 517.6L289.8 514.9Z" fill="#2785a5"/>
<path d="M302.5 508.4L310.0 511.0L308.4 521.3L300.9 518.7Z" fill="#187696"/>
<path d="M313.3 512.2L320.7 514.7L319.2 525.0L311.8 522.5Z" fill="#2987a7"/>
<path d="M324.0 515.9L331.2 518.4L329.8 528.6L322.5 526.1Z" fill="#207e9e"/>
<path d="M334.4 519.5L341.5 522.0L340.2 532.2L333.1 529.7Z" fill="#177595"/>
<path d="M344.7 523.1L351.6 525.6L350.5 535.7L343.4 533.2Z" fill="#157393"/>
<path d="M109.3 459.1L119.3 462.5L115.4 474.0L105.3 470.6Z" fill="#187495"/>
<path d="M123.8 464.0L133.6 467.3L129.9 478.7L120.0 475.5Z" fill="#217f9f"/>
<path d="M138.0 468.8L147.6 472.0L144.1 483.4L134.4 480.2Z" fill="#127090"/>
<path d="M151.9 473.5L161.4 476.7L158.0 488.0L148.5 484.8Z" fill="#2280a0"/>
<path d="M165.6 478.1L174.9 481.2L171.7 492.4L162.3 489.4Z" fill="#197797"/>
<path d="M179.0 482.6L188.1 485.7L185.1 496.8L175.9 493.8Z" fill="#2583a3"/>
<path d="M192.1 487.0L201.0 490.0L198.2 501.2L189.2 498.2Z" fill="#147292"/>
<path d="M205.0 491.4L213.8 494.3L211.1 505.4L202.2 502.5Z" fill="#1b7999"/>
<path d="M217.7 495.6L226.3 498.5L223.7 509.5L215.0 506.7Z" fill="#217f9f"/>
<path d="M230.1 499.8L238.5 502.7L236.1 513.6L227.6 510.8Z" fill="#167494"/>
<path d="M242.3 503.9L250.6 506.7L248.3 517.6L239.9 514.9Z" fill="#1c7a9a"/>
<path d="M254.3 508.0L262.4 510.7L260.3 521.5L252.1 518.8Z" fill="#197797"/>
<path d="M266.0 512.0L274.0 514.7L272.0 525.4L264.0 522.7Z" fill="#197797"/>
<path d="M277.6 515.9L285.5 518.5L283.6 529.2L275.6 526.6Z" fill="#1b7999"/>
<path d="M289.0 519.7L296.7 522.3L294.9 532.9L287.1 530.4Z" fill="#2785a5"/>
<path d="M300.1 523.4L307.7 526.0L306.1 536.6L298.4 534.1Z" fill="#1b7999"/>
<path d="M311.1 527.1L318.5 529.7L317.0 540.2L309.5 537.7Z" fill="#2381a1"/>
<path d="M321.9 530.8L329.2 533.2L327.8 543.7L320.4 541.3Z" fill="#127090"/>
<path d="M332.4 534.3L339.7 536.8L338.4 547.2L331.1 544.8Z" fill="#1c7a9a"/>
<path d="M342.9 537.9L349.9 540.2L348.7 550.6L341.6 548.2Z" fill="#1c7a9a"/>
<path d="M88.4 471.0L98.8 474.4L94.6 486.3L84.0 483.0Z" fill="#1d7b9b"/>
<path d="M103.4 475.9L113.7 479.2L109.7 491.1L99.3 487.8Z" fill="#127090"/>
<path d="M118.2 480.7L128.2 483.9L124.4 495.7L114.3 492.5Z" fill="#217f9f"/>
<path d="M132.7 485.4L142.5 488.6L138.9 500.3L128.9 497.2Z" fill="#147292"/>
<path d="M146.9 490.0L156.5 493.1L153.1 504.8L143.3 501.7Z" fill="#1b7999"/>
<path d="M160.8 494.5L170.2 497.6L167.0 509.2L157.4 506.1Z" fill="#167494"/>
<path d="M174.4 498.9L183.7 501.9L180.6 513.4L171.2 510.5Z" fill="#1f7d9d"/>
<path d="M187.8 503.3L196.9 506.2L194.0 517.7L184.8 514.8Z" fill="#157393"/>
<path d="M200.9 507.5L209.9 510.4L207.1 521.8L198.1 519.0Z" fill="#2583a3"/>
<path d="M213.8 511.7L222.6 514.5L220.0 525.9L211.1 523.1Z" fill="#177595"/>
<path d="M226.5 515.8L235.1 518.6L232.6 529.8L223.9 527.1Z" fill="#2987a7"/>
<path d="M238.9 519.8L247.3 522.6L245.0 533.7L236.4 531.1Z" fill="#1e7c9c"/>
<path d="M251.1 523.8L259.3 526.5L257.1 537.6L248.8 534.9Z" fill="#2886a6"/>
<path d="M263.0 527.7L271.1 530.3L269.1 541.4L260.9 538.8Z" fill="#2886a6"/>
<path d="M274.8 531.5L282.7 534.1L280.8 545.1L272.7 542.5Z" fill="#2684a4"/>
<path d="M286.3 535.2L294.1 537.8L292.3 548.7L284.4 546.2Z" fill="#2583a3"/>
<path d="M297.6 538.9L305.3 541.4L303.6 552.3L295.9 549.8Z" fill="#1c7a9a"/>
<path d="M308.8 542.5L316.3 545.0L314.8 555.8L307.1 553.3Z" fill="#2684a4"/>
<path d="M319.7 546.0L327.1 548.5L325.7 559.2L318.2 556.8Z" fill="#177595"/>
<path d="M330.4 549.5L337.8 551.9L336.4 562.6L329.0 560.3Z" fill="#1e7c9c"/>
<path d="M341.0 553.0L348.2 555.3L347.0 565.9L339.7 563.6Z" fill="#157393"/>
<path d="M82.0 488.5L92.7 491.8L88.3 504.1L77.5 500.8Z" fill="#2381a1"/>
<path d="M97.4 493.2L107.8 496.5L103.7 508.7L93.1 505.5Z" fill="#137191"/>
<path d="M112.5 497.9L122.7 501.1L118.7 513.3L108.4 510.1Z" fill="#2482a2"/>
<path d="M127.2 502.5L137.2 505.6L133.5 517.7L123.3 514.7Z" fill="#2684a4"/>
<path d="M141.7 507.0L151.5 510.1L147.9 522.1L138.0 519.1Z" fill="#207e9e"/>
<path d="M155.9 511.4L165.5 514.4L162.1 526.4L152.4 523.4Z" fill="#217f9f"/>
<path d="M169.8 515.8L179.2 518.7L176.0 530.6L166.4 527.7Z" fill="#1c7a9a"/>
<path d="M183.4 520.0L192.6 522.9L189.6 534.7L180.2 531.8Z" fill="#1c7a9a"/>
<path d="M196.7 524.2L205.8 527.0L203.0 538.7L193.8 535.9Z" fill="#1d7b9b"/>
<path d="M209.9 528.2L218.8 531.0L216.1 542.7L207.1 539.9Z" fill="#137191"/>
<path d="M222.7 532.2L231.5 535.0L228.9 546.5L220.1 543.9Z" fill="#1e7c9c"/>
<path d="M235.3 536.2L243.9 538.8L241.5 550.4L232.8 547.7Z" fill="#2482a2"/>
<path d="M247.7 540.0L256.1 542.7L253.9 554.1L245.4 551.5Z" fill="#1d7b9b"/>
<path d="M259.9 543.8L268.1 546.4L266.0 557.8L257.7 555.2Z" fill="#1d7b9b"/>
<path d="M271.8 547.5L279.9 550.1L278.0 561.4L269.8 558.9Z" fill="#157393"/>
<path d="M283.5 551.2L291.5 553.7L289.7 564.9L281.6 562.5Z" fill="#147292"/>
<path d="M295.1 554.8L302.9 557.2L301.2 568.4L293.2 566.0Z" fill="#1e7c9c"/>
<path d="M306.4 558.3L314.1 560.7L312.4 571.8L304.7 569.4Z" fill="#217f9f"/>
<path d="M317.5 561.7L325.0 564.1L323.5 575.1L315.9 572.8Z" fill="#2482a2"/>
<path d="M328.4 565.1L335.8 567.5L334.4 578.4L326.9 576.2Z" fill="#1e7c9c"/>
<path d="M339.1 568.5L346.4 570.7L345.1 581.7L337.8 579.4Z" fill="#1e7c9c"/>
<path d="M349.7 571.8L356.8 574.0L355.7 584.8L348.4 582.6Z" fill="#2987a7"/>
<path d="M75.4 506.5L86.3 509.7L81.8 522.4L70.8 519.2Z" fill="#346b7d"/>
<path d="M91.1 511.1L101.8 514.3L97.5 526.9L86.7 523.8Z" fill="#205869"/>
<path d="M106.5 515.7L116.9 518.8L112.9 531.4L102.3 528.3Z" fill="#336a7c"/>
<path d="M121.6 520.2L131.8 523.2L127.9 535.7L117.6 532.7Z" fill="#5c6c7f"/>
<path d="M136.3 524.6L146.3 527.6L142.7 540.0L132.5 537.0Z" fill="#98933a"/>
<path d="M150.8 528.9L160.6 531.8L157.1 544.1L147.2 541.3Z" fill="#5e6f82"/>
<path d="M164.9 533.1L174.5 536.0L171.2 548.2L161.5 545.4Z" fill="#1f5768"/>
<path d="M178.8 537.2L188.2 540.1L185.1 552.2L175.6 549.5Z" fill="#21586a"/>
<path d="M192.4 541.3L201.7 544.1L198.7 556.1L189.4 553.4Z" fill="#235b6c"/>
<path d="M205.8 545.3L214.8 548.0L212.1 560.0L202.9 557.3Z" fill="#4d5d70"/>
<path d="M218.9 549.2L227.8 551.8L225.1 563.7L216.1 561.1Z" fill="#2280a0"/>
<path d="M231.7 553.0L240.4 555.6L238.0 567.4L229.1 564.9Z" fill="#167494"/>
<path d="M244.3 556.8L252.9 559.3L250.5 571.1L241.9 568.6Z" fill="#157393"/>
<path d="M256.7 560.4L265.1 562.9L262.9 574.6L254.4 572.2Z" fill="#217f9f"/>
<path d="M268.8 564.1L277.1 566.5L275.0 578.1L266.7 575.7Z" fill="#2785a5"/>
<path d="M280.7 567.6L288.8 570.0L286.9 581.6L278.7 579.2Z" fill="#207e9e"/>
<path d="M292.4 571.1L300.4 573.5L298.6 584.9L290.6 582.6Z" fill="#157393"/>
<path d="M303.9 574.5L311.7 576.8L310.1 588.2L302.2 586.0Z" fill="#217f9f"/>
<path d="M315.2 577.9L322.9 580.2L321.3 591.5L313.6 589.3Z" fill="#2583a3"/>
<path d="M326.3 581.2L333.8 583.4L332.4 594.7L324.8 592.5Z" fill="#2a88a8"/>
<path d="M337.2 584.4L344.6 586.6L343.3 597.8L335.8 595.7Z" fill="#1b7999"/>
<path d="M347.9 587.6L355.1 589.8L354.0 600.9L346.6 598.8Z" fill="#1d7b9b"/>
<path d="M68.7 525.1L79.8 528.2L75.1 541.4L63.8 538.3Z" fill="#26383b"/>
<path d="M66.7 534.4L75.3 536.8L74.0 540.4L65.4 538.0Z" fill="#8a7a50" opacity=".55"/>
<path d="M84.7 529.6L95.6 532.7L91.1 545.8L80.1 542.7Z" fill="#3d4e51"/>
<path d="M100.4 534.1L111.0 537.1L106.8 550.1L96.0 547.1Z" fill="#25363a"/>
<path d="M98.7 543.3L106.9 545.5L105.8 549.1L97.5 546.9Z" fill="#8a7a50" opacity=".55"/>
<path d="M115.7 538.4L126.2 541.4L122.2 554.3L111.6 551.4Z" fill="#304144"/>
<path d="M130.8 542.7L141.0 545.6L137.2 558.4L126.9 555.6Z" fill="#525360"/>
<path d="M129.3 551.8L137.2 554.0L136.2 557.5L128.2 555.3Z" fill="#8a7a50" opacity=".55"/>
<path d="M145.5 546.9L155.5 549.7L151.9 562.4L141.8 559.7Z" fill="#9b8b2d"/>
<path d="M144.2 555.9L151.9 558.0L150.9 561.6L143.1 559.4Z" fill="#8a7a50" opacity=".55"/>
<path d="M160.0 551.0L169.7 553.8L166.4 566.4L156.4 563.7Z" fill="#334448"/>
<path d="M158.7 559.9L166.3 562.0L165.4 565.5L157.7 563.4Z" fill="#8a7a50" opacity=".55"/>
<path d="M174.1 555.0L183.7 557.7L180.5 570.3L170.8 567.6Z" fill="#314245"/>
<path d="M188.0 559.0L197.4 561.6L194.3 574.1L184.8 571.5Z" fill="#293a3d"/>
<path d="M201.6 562.8L210.8 565.4L207.9 577.8L198.6 575.2Z" fill="#38494c"/>
<path d="M200.6 571.6L207.8 573.5L207.0 577.0L199.8 575.0Z" fill="#8a7a50" opacity=".55"/>
<path d="M214.9 566.6L223.9 569.2L221.2 581.5L212.1 578.9Z" fill="#187792"/>
<path d="M228.0 570.3L236.8 572.8L234.3 585.0L225.3 582.6Z" fill="#25849f"/>
<path d="M240.8 574.0L249.5 576.4L247.1 588.6L238.3 586.1Z" fill="#2786a1"/>
<path d="M253.4 577.5L261.9 580.0L259.7 592.0L251.0 589.6Z" fill="#2e8da8"/>
<path d="M265.7 581.0L274.1 583.4L272.0 595.4L263.5 593.1Z" fill="#1e7d98"/>
<path d="M277.8 584.5L286.1 586.8L284.1 598.7L275.8 596.4Z" fill="#197893"/>
<path d="M289.7 587.9L297.8 590.2L296.0 602.0L287.8 599.7Z" fill="#22819c"/>
<path d="M301.4 591.2L309.3 593.4L307.6 605.2L299.6 603.0Z" fill="#197893"/>
<path d="M312.9 594.4L320.6 596.7L319.1 608.3L311.2 606.1Z" fill="#187792"/>
<path d="M324.1 597.6L331.8 599.8L330.3 611.4L322.6 609.3Z" fill="#2f8ea8"/>
<path d="M335.2 600.8L342.7 602.9L341.4 614.4L333.8 612.3Z" fill="#1d7c97"/>
<path d="M346.0 603.9L353.4 606.0L352.2 617.4L344.7 615.4Z" fill="#25839e"/>
<path d="M61.6 544.3L73.0 547.4L68.2 560.9L56.7 558.0Z" fill="#2e2c28"/>
<path d="M59.6 553.9L68.4 556.2L67.1 560.0L58.2 557.7Z" fill="#8a7a50" opacity=".55"/>
<path d="M78.0 548.7L89.1 551.7L84.5 565.2L73.3 562.3Z" fill="#a99334"/>
<path d="M94.0 553.0L104.9 556.0L100.6 569.4L89.5 566.5Z" fill="#a89233"/>
<path d="M92.3 562.5L100.7 564.7L99.5 568.4L91.0 566.2Z" fill="#8a7a50" opacity=".55"/>
<path d="M109.7 557.3L120.3 560.1L116.2 573.4L105.4 570.6Z" fill="#35332f"/>
<path d="M108.1 566.7L116.3 568.8L115.2 572.5L106.9 570.4Z" fill="#8a7a50" opacity=".55"/>
<path d="M125.1 561.4L135.5 564.2L131.6 577.4L121.0 574.7Z" fill="#2b2925"/>
<path d="M140.1 565.5L150.3 568.2L146.6 581.3L136.3 578.7Z" fill="#3e3c38"/>
<path d="M138.7 574.7L146.6 576.8L145.6 580.5L137.6 578.4Z" fill="#8a7a50" opacity=".55"/>
<path d="M154.8 569.5L164.8 572.2L161.3 585.2L151.2 582.5Z" fill="#34322e"/>
<path d="M169.2 573.4L179.0 576.0L175.7 588.9L165.8 586.3Z" fill="#393733"/>
<path d="M168.1 582.5L175.6 584.5L174.7 588.1L167.1 586.1Z" fill="#8a7a50" opacity=".55"/>
<path d="M183.4 577.2L193.0 579.8L189.8 592.6L180.1 590.1Z" fill="#2a2824"/>
<path d="M182.3 586.2L189.7 588.2L188.9 591.7L181.4 589.8Z" fill="#8a7a50" opacity=".55"/>
<path d="M197.2 580.9L206.6 583.4L203.7 596.2L194.2 593.7Z" fill="#413f3b"/>
<path d="M196.2 589.9L203.5 591.8L202.7 595.3L195.4 593.4Z" fill="#8a7a50" opacity=".55"/>
<path d="M210.8 584.6L220.0 587.1L217.2 599.7L207.9 597.3Z" fill="#3393a9"/>
<path d="M215.0 586.9 L212.9 596.2" stroke="#d8efe8" stroke-width="1.1" opacity=".7"/>
<path d="M224.1 588.2L233.1 590.6L230.5 603.2L221.4 600.8Z" fill="#248399"/>
<path d="M228.2 590.4 L226.2 599.7" stroke="#d8efe8" stroke-width="1.1" opacity=".7"/>
<path d="M237.2 591.7L246.0 594.1L243.6 606.6L234.6 604.2Z" fill="#2d8da3"/>
<path d="M241.2 593.9 L239.3 603.2" stroke="#d8efe8" stroke-width="1.1" opacity=".7"/>
<path d="M250.0 595.1L258.6 597.5L256.3 609.9L247.5 607.6Z" fill="#2e8ea4"/>
<path d="M253.9 597.3 L252.2 606.5" stroke="#d8efe8" stroke-width="1.1" opacity=".7"/>
<path d="M262.5 598.5L271.0 600.8L268.9 613.2L260.3 610.9Z" fill="#2a899f"/>
<path d="M266.4 600.7 L264.8 609.8" stroke="#d8efe8" stroke-width="1.1" opacity=".7"/>
<path d="M274.8 601.9L283.2 604.1L281.2 616.4L272.7 614.2Z" fill="#308fa4"/>
<path d="M278.7 604.0 L277.1 613.1" stroke="#d8efe8" stroke-width="1.1" opacity=".7"/>
<path d="M286.9 605.1L295.1 607.3L293.3 619.5L285.0 617.3Z" fill="#2a899e"/>
<path d="M290.7 607.2 L289.3 616.2" stroke="#d8efe8" stroke-width="1.1" opacity=".7"/>
<path d="M298.8 608.3L306.9 610.5L305.1 622.6L297.0 620.5Z" fill="#2d8da1"/>
<path d="M302.5 610.4 L301.2 619.4" stroke="#d8efe8" stroke-width="1.1" opacity=".7"/>
<path d="M310.4 611.5L318.4 613.6L316.7 625.6L308.7 623.5Z" fill="#258498"/>
<path d="M314.1 613.5 L312.9 622.4" stroke="#d8efe8" stroke-width="1.1" opacity=".7"/>
<path d="M321.9 614.6L329.7 616.7L328.2 628.6L320.3 626.5Z" fill="#228195"/>
<path d="M325.5 616.6 L324.3 625.4" stroke="#d8efe8" stroke-width="1.1" opacity=".7"/>
<path d="M333.1 617.6L340.7 619.7L339.4 631.5L331.7 629.5Z" fill="#248397"/>
<path d="M336.7 619.6 L335.6 628.4" stroke="#d8efe8" stroke-width="1.1" opacity=".7"/>
<path d="M344.1 620.6L351.6 622.6L350.4 634.4L342.8 632.4Z" fill="#238296"/>
<path d="M347.6 622.6 L346.7 631.3" stroke="#d8efe8" stroke-width="1.1" opacity=".7"/>
<path d="M37.3 559.8L49.1 562.8L43.9 577.0L31.9 574.1Z" fill="#2d2b27"/>
<path d="M35.0 569.8L44.2 572.1L42.7 576.0L33.5 573.8Z" fill="#8a7a50" opacity=".55"/>
<path d="M54.4 564.2L66.0 567.2L61.0 581.2L49.2 578.3Z" fill="#393733"/>
<path d="M71.1 568.5L82.5 571.4L77.7 585.3L66.2 582.5Z" fill="#a28c2d"/>
<path d="M87.5 572.7L98.6 575.5L94.1 589.3L82.8 586.6Z" fill="#3f3d39"/>
<path d="M103.5 576.7L114.3 579.5L110.1 593.3L99.1 590.6Z" fill="#413f3b"/>
<path d="M101.8 586.4L110.2 588.5L109.0 592.3L100.6 590.3Z" fill="#8a7a50" opacity=".55"/>
<path d="M119.2 580.8L129.8 583.5L125.8 597.1L115.0 594.5Z" fill="#4f4953"/>
<path d="M134.5 584.7L144.9 587.3L141.1 600.9L130.5 598.3Z" fill="#3e3c38"/>
<path d="M133.0 594.2L141.1 596.2L140.0 600.0L131.9 598.0Z" fill="#8a7a50" opacity=".55"/>
<path d="M149.5 588.5L159.7 591.1L156.1 604.6L145.8 602.0Z" fill="#968021"/>
<path d="M148.2 598.0L156.1 599.9L155.1 603.7L147.1 601.7Z" fill="#8a7a50" opacity=".55"/>
<path d="M164.2 592.3L174.2 594.8L170.8 608.2L160.7 605.7Z" fill="#34322e"/>
<path d="M163.0 601.7L170.7 603.6L169.8 607.3L162.0 605.4Z" fill="#8a7a50" opacity=".55"/>
<path d="M178.6 596.0L188.4 598.4L185.2 611.7L175.3 609.3Z" fill="#3b3935"/>
<path d="M177.5 605.3L185.1 607.2L184.2 610.8L176.6 609.0Z" fill="#8a7a50" opacity=".55"/>
<path d="M192.7 599.6L202.3 602.0L199.3 615.2L189.6 612.8Z" fill="#363430"/>
<path d="M206.6 603.1L216.0 605.5L213.1 618.5L203.6 616.2Z" fill="#268696"/>
<path d="M210.8 605.4 L208.7 615.0" stroke="#d8efe8" stroke-width="1.1" opacity=".7"/>
<path d="M220.1 606.6L229.3 608.9L226.6 621.9L217.3 619.6Z" fill="#3191a0"/>
<path d="M224.3 608.8 L222.3 618.4" stroke="#d8efe8" stroke-width="1.1" opacity=".7"/>
<path d="M233.4 610.0L242.4 612.3L239.9 625.1L230.8 622.9Z" fill="#2f8f9d"/>
<path d="M237.5 612.2 L235.6 621.7" stroke="#d8efe8" stroke-width="1.1" opacity=".7"/>
<path d="M246.5 613.3L255.3 615.5L252.9 628.3L244.0 626.1Z" fill="#3494a2"/>
<path d="M250.5 615.5 L248.7 624.9" stroke="#d8efe8" stroke-width="1.1" opacity=".7"/>
<path d="M259.2 616.6L267.9 618.8L265.7 631.5L256.9 629.3Z" fill="#3c9caa"/>
<path d="M263.2 618.7 L261.5 628.1" stroke="#d8efe8" stroke-width="1.1" opacity=".7"/>
<path d="M271.8 619.8L280.3 621.9L278.2 634.5L269.6 632.4Z" fill="#3c9ba8"/>
<path d="M275.7 621.9 L274.1 631.2" stroke="#d8efe8" stroke-width="1.1" opacity=".7"/>
<path d="M284.1 622.9L292.4 625.0L290.5 637.5L282.0 635.5Z" fill="#298895"/>
<path d="M287.9 625.0 L286.4 634.3" stroke="#d8efe8" stroke-width="1.1" opacity=".7"/>
<path d="M296.1 626.0L304.3 628.1L302.5 640.5L294.2 638.5Z" fill="#3b9ba7"/>
<path d="M299.9 628.1 L298.5 637.3" stroke="#d8efe8" stroke-width="1.1" opacity=".7"/>
<path d="M308.0 629.0L316.0 631.1L314.3 643.4L306.2 641.4Z" fill="#2a8995"/>
<path d="M311.7 631.1 L310.4 640.2" stroke="#d8efe8" stroke-width="1.1" opacity=".7"/>
<path d="M319.6 632.0L327.5 634.0L326.0 646.2L318.0 644.3Z" fill="#3695a0"/>
<path d="M323.2 634.0 L322.1 643.1" stroke="#d8efe8" stroke-width="1.1" opacity=".7"/>
<path d="M331.0 634.9L338.8 636.9L337.3 649.0L329.5 647.1Z" fill="#2f8e99"/>
<path d="M334.6 636.9 L333.5 645.9" stroke="#d8efe8" stroke-width="1.1" opacity=".7"/>
<path d="M342.2 637.8L349.8 639.7L348.5 651.8L340.8 649.9Z" fill="#33929d"/>
<path d="M345.7 639.7 L344.8 648.7" stroke="#d8efe8" stroke-width="1.1" opacity=".7"/>
<path d="M46.9 584.8L58.7 587.6L53.6 602.2L41.5 599.4Z" fill="#413f3b"/>
<path d="M44.7 595.0L53.8 597.2L52.4 601.2L43.2 599.1Z" fill="#8a7a50" opacity=".55"/>
<path d="M64.0 588.9L75.6 591.7L70.7 606.1L58.9 603.4Z" fill="#363430"/>
<path d="M80.7 592.9L92.0 595.7L87.4 610.0L75.9 607.3Z" fill="#a79131"/>
<path d="M97.1 596.9L108.1 599.5L103.7 613.8L92.5 611.2Z" fill="#33312d"/>
<path d="M95.3 606.9L103.9 608.9L102.6 612.8L94.0 610.8Z" fill="#8a7a50" opacity=".55"/>
<path d="M113.1 600.7L123.9 603.3L119.7 617.4L108.7 614.9Z" fill="#2c2a26"/>
<path d="M111.4 610.6L119.8 612.6L118.7 616.5L110.2 614.6Z" fill="#8a7a50" opacity=".55"/>
<path d="M128.7 604.5L139.3 607.1L135.4 621.0L124.6 618.6Z" fill="#302e2a"/>
<path d="M144.1 608.2L154.4 610.7L150.7 624.6L140.2 622.1Z" fill="#3f3d39"/>
<path d="M142.6 617.9L150.7 619.8L149.7 623.7L141.6 621.8Z" fill="#8a7a50" opacity=".55"/>
<path d="M159.1 611.8L169.2 614.2L165.7 628.0L155.4 625.7Z" fill="#3c3a36"/>
<path d="M173.7 615.3L183.7 617.7L180.4 631.4L170.3 629.1Z" fill="#32302c"/>
<path d="M188.1 618.8L197.9 621.2L194.7 634.7L184.9 632.4Z" fill="#3c3a36"/>
<path d="M187.1 628.3L194.6 630.1L193.7 633.9L186.2 632.1Z" fill="#8a7a50" opacity=".55"/>
<path d="M202.2 622.2L211.8 624.5L208.8 638.0L199.1 635.7Z" fill="#43a3a9"/>
<path d="M206.6 624.5 L204.3 634.4" stroke="#d8efe8" stroke-width="1.1" opacity=".7"/>
<path d="M216.0 625.5L225.4 627.8L222.6 641.1L213.1 639.0Z" fill="#349499"/>
<path d="M220.3 627.8 L218.2 637.7" stroke="#d8efe8" stroke-width="1.1" opacity=".7"/>
<path d="M229.6 628.8L238.8 631.0L236.1 644.3L226.8 642.1Z" fill="#47a6ab"/>
<path d="M233.7 631.0 L231.8 640.8" stroke="#d8efe8" stroke-width="1.1" opacity=".7"/>
<path d="M242.8 632.0L251.8 634.1L249.4 647.3L240.3 645.2Z" fill="#37969b"/>
<path d="M246.9 634.2 L245.1 643.9" stroke="#d8efe8" stroke-width="1.1" opacity=".7"/>
<path d="M255.8 635.1L264.7 637.2L262.4 650.3L253.4 648.2Z" fill="#44a3a7"/>
<path d="M259.9 637.3 L258.1 646.9" stroke="#d8efe8" stroke-width="1.1" opacity=".7"/>
<path d="M268.6 638.2L277.3 640.3L275.1 653.2L266.4 651.2Z" fill="#37969a"/>
<path d="M272.6 640.3 L270.9 649.9" stroke="#d8efe8" stroke-width="1.1" opacity=".7"/>
<path d="M281.1 641.2L289.6 643.2L287.6 656.1L279.0 654.1Z" fill="#3a999c"/>
<path d="M285.0 643.3 L283.5 652.8" stroke="#d8efe8" stroke-width="1.1" opacity=".7"/>
<path d="M293.4 644.2L301.7 646.2L299.9 658.9L291.4 657.0Z" fill="#41a0a2"/>
<path d="M297.2 646.2 L295.8 655.7" stroke="#d8efe8" stroke-width="1.1" opacity=".7"/>
<path d="M305.4 647.1L313.6 649.0L311.9 661.7L303.6 659.8Z" fill="#3d9c9e"/>
<path d="M309.2 649.1 L307.9 658.5" stroke="#d8efe8" stroke-width="1.1" opacity=".7"/>
<path d="M317.2 649.9L325.3 651.8L323.7 664.4L315.6 662.6Z" fill="#4dacad"/>
<path d="M320.9 651.9 L319.7 661.2" stroke="#d8efe8" stroke-width="1.1" opacity=".7"/>
<path d="M328.8 652.7L336.7 654.6L335.3 667.1L327.3 665.3Z" fill="#399798"/>
<path d="M332.5 654.7 L331.4 663.9" stroke="#d8efe8" stroke-width="1.1" opacity=".7"/>
<path d="M340.2 655.4L347.9 657.3L346.6 669.7L338.8 667.9Z" fill="#399898"/>
<path d="M343.8 657.4 L342.8 666.6" stroke="#d8efe8" stroke-width="1.1" opacity=".7"/>
<path d="M39.1 606.1L51.2 608.8L45.9 623.9L33.6 621.3Z" fill="#3d3b37"/>
<path d="M36.8 616.7L46.2 618.8L44.7 622.9L35.3 620.9Z" fill="#8a7a50" opacity=".55"/>
<path d="M56.6 610.1L68.4 612.7L63.4 627.7L51.3 625.1Z" fill="#5e5762"/>
<path d="M54.4 620.6L63.6 622.6L62.2 626.7L53.0 624.7Z" fill="#8a7a50" opacity=".55"/>
<path d="M73.7 613.9L85.3 616.5L80.5 631.4L68.7 628.8Z" fill="#2b2925"/>
<path d="M90.4 617.7L101.7 620.2L97.2 634.9L85.7 632.5Z" fill="#363430"/>
<path d="M88.5 628.0L97.3 629.9L96.1 634.0L87.2 632.1Z" fill="#8a7a50" opacity=".55"/>
<path d="M106.8 621.4L117.8 623.9L113.5 638.5L102.3 636.0Z" fill="#5d5661"/>
<path d="M122.8 625.0L133.6 627.4L129.5 641.9L118.5 639.5Z" fill="#34322e"/>
<path d="M138.4 628.5L149.0 630.9L145.1 645.3L134.4 642.9Z" fill="#2f2d29"/>
<path d="M153.7 632.0L164.1 634.3L160.4 648.6L149.9 646.3Z" fill="#3b3935"/>
<path d="M168.7 635.4L178.8 637.7L175.4 651.8L165.1 649.6Z" fill="#35332f"/>
<path d="M183.4 638.7L193.3 640.9L190.1 654.9L180.0 652.8Z" fill="#9e8828"/>
<path d="M197.7 641.9L207.5 644.1L204.4 658.0L194.5 655.9Z" fill="#4caba6"/>
<path d="M202.1 644.2 L199.8 654.5" stroke="#d8efe8" stroke-width="1.1" opacity=".7"/>
<path d="M211.8 645.1L221.4 647.2L218.5 661.0L208.8 659.0Z" fill="#48a7a1"/>
<path d="M216.1 647.3 L214.0 657.5" stroke="#d8efe8" stroke-width="1.1" opacity=".7"/>
<path d="M225.6 648.2L234.9 650.3L232.3 664.0L222.8 662.0Z" fill="#4daca6"/>
<path d="M229.8 650.4 L227.8 660.5" stroke="#d8efe8" stroke-width="1.1" opacity=".7"/>
<path d="M239.1 651.3L248.3 653.3L245.8 666.9L236.5 664.9Z" fill="#4faea7"/>
<path d="M243.3 653.4 L241.4 663.5" stroke="#d8efe8" stroke-width="1.1" opacity=".7"/>
<path d="M252.4 654.2L261.3 656.3L259.0 669.7L249.9 667.8Z" fill="#44a39b"/>
<path d="M256.5 656.4 L254.7 666.4" stroke="#d8efe8" stroke-width="1.1" opacity=".7"/>
<path d="M265.3 657.2L274.1 659.2L271.9 672.5L263.0 670.6Z" fill="#53b2a9"/>
<path d="M269.4 659.3 L267.7 669.2" stroke="#d8efe8" stroke-width="1.1" opacity=".7"/>
<path d="M48.9 632.0L61.1 634.5L55.8 650.0L43.5 647.6Z" fill="#413f3b"/>
<path d="M66.4 635.6L78.3 638.1L73.3 653.5L61.3 651.1Z" fill="#615b65"/>
<path d="M83.5 639.2L95.1 641.7L90.4 656.9L78.6 654.6Z" fill="#5c5660"/>
<path d="M100.2 642.7L111.5 645.1L107.1 660.2L95.6 657.9Z" fill="#393733"/>
<path d="M116.6 646.2L127.6 648.5L123.4 663.5L112.2 661.2Z" fill="#413f3b"/>
<path d="M132.5 649.5L143.4 651.8L139.4 666.7L128.4 664.5Z" fill="#3c3a36"/>
<path d="M148.2 652.8L158.8 655.1L155.0 669.8L144.3 667.6Z" fill="#2b2925"/>
<path d="M146.8 663.1L155.0 664.8L153.9 668.9L145.7 667.2Z" fill="#8a7a50" opacity=".55"/>
<path d="M163.5 656.0L173.8 658.2L170.3 672.8L159.8 670.7Z" fill="#9e8828"/>
<path d="M178.4 659.2L188.6 661.3L185.2 675.8L175.0 673.7Z" fill="#302e2a"/>
<path d="M193.1 662.3L203.0 664.4L199.9 678.7L189.8 676.7Z" fill="#59b7ad"/>
<path d="M197.6 664.5 L195.2 675.1" stroke="#d8efe8" stroke-width="1.1" opacity=".7"/>
<path d="M207.4 665.3L217.2 667.3L214.2 681.6L204.4 679.6Z" fill="#48a69c"/>
<path d="M211.9 667.5 L209.6 678.0" stroke="#d8efe8" stroke-width="1.1" opacity=".7"/>
<path d="M221.5 668.2L231.0 670.2L228.2 684.4L218.6 682.4Z" fill="#4daba0"/>
<path d="M225.8 670.4 L223.7 680.9" stroke="#d8efe8" stroke-width="1.1" opacity=".7"/>
<path d="M235.3 671.1L244.6 673.1L242.0 687.1L232.5 685.2Z" fill="#47a599"/>
<path d="M239.5 673.3 L237.5 683.7" stroke="#d8efe8" stroke-width="1.1" opacity=".7"/>
<path d="M41.0 654.7L53.4 657.1L48.0 673.1L35.4 670.8Z" fill="#393733"/>
<path d="M58.9 658.2L71.0 660.5L65.9 676.4L53.6 674.2Z" fill="#413f3b"/>
<path d="M76.4 661.6L88.2 663.9L83.3 679.6L71.3 677.4Z" fill="#3e3c38"/>
<path d="M74.3 672.6L83.5 674.3L82.2 678.7L72.9 677.0Z" fill="#8a7a50" opacity=".55"/>
<path d="M93.5 664.9L105.0 667.1L100.4 682.7L88.7 680.6Z" fill="#2d2b27"/>
<path d="M91.6 675.8L100.6 677.5L99.3 681.8L90.3 680.2Z" fill="#8a7a50" opacity=".55"/>
<path d="M110.2 668.1L121.5 670.3L117.1 685.8L105.6 683.7Z" fill="#302e2a"/>
<path d="M108.4 678.9L117.2 680.6L116.0 684.9L107.2 683.3Z" fill="#8a7a50" opacity=".55"/>
<path d="M126.5 671.3L137.6 673.4L133.4 688.8L122.2 686.7Z" fill="#2e2c28"/>
<path d="M142.5 674.4L153.3 676.5L149.4 691.7L138.4 689.7Z" fill="#302e2a"/>
<path d="M141.0 685.0L149.4 686.6L148.3 690.8L139.9 689.3Z" fill="#8a7a50" opacity=".55"/>
<path d="M158.1 677.4L168.7 679.5L165.0 694.6L154.2 692.6Z" fill="#393733"/>
<path d="M156.7 688.0L164.9 689.5L163.9 693.7L155.7 692.2Z" fill="#8a7a50" opacity=".55"/>
<path d="M173.4 680.4L183.7 682.4L180.2 697.4L169.7 695.4Z" fill="#3f3d39"/>
<path d="M188.3 683.3L198.4 685.3L195.2 700.1L184.9 698.2Z" fill="#5dbaab"/>
<path d="M192.9 685.5 L190.4 696.5" stroke="#d8efe8" stroke-width="1.1" opacity=".7"/>
<path d="M202.9 686.1L212.9 688.1L209.8 702.8L199.7 700.9Z" fill="#4ca899"/>
<path d="M207.4 688.3 L205.1 699.2" stroke="#d8efe8" stroke-width="1.1" opacity=".7"/>
<path d="M217.3 688.9L227.0 690.8L224.1 705.4L214.3 703.6Z" fill="#58b5a5"/>
<path d="M221.7 691.1 L219.5 701.9" stroke="#d8efe8" stroke-width="1.1" opacity=".7"/>
<path d="M231.3 691.6L240.8 693.5L238.1 707.9L228.5 706.2Z" fill="#4aa696"/>
<path d="M235.6 693.8 L233.6 704.5" stroke="#d8efe8" stroke-width="1.1" opacity=".7"/>
<path d="M245.0 694.3L254.4 696.1L251.8 710.5L242.4 708.7Z" fill="#5ab6a5"/>
<path d="M249.3 696.4 L247.4 707.0" stroke="#d8efe8" stroke-width="1.1" opacity=".7"/>
<path d="M51.1 681.5L63.5 683.7L58.2 700.2L45.6 698.1Z" fill="#524b56"/>
<path d="M69.0 684.7L81.1 686.8L76.0 703.2L63.7 701.1Z" fill="#2e2c28"/>
<path d="M86.5 687.8L98.3 689.9L93.5 706.1L81.5 704.1Z" fill="#645d68"/>
<path d="M103.6 690.8L115.1 692.9L110.6 708.9L98.8 707.0Z" fill="#3f3d39"/>
<path d="M120.2 693.8L131.5 695.8L127.3 711.7L115.8 709.8Z" fill="#5f5863"/>
<path d="M152.5 699.5L163.3 701.5L159.5 717.1L148.5 715.2Z" fill="#3f3d39"/>
<path d="M151.1 710.4L159.5 711.8L158.4 716.2L150.0 714.8Z" fill="#8a7a50" opacity=".55"/>
<path d="M168.1 702.3L178.7 704.2L175.1 719.7L164.4 717.9Z" fill="#2d2b27"/>
<path d="M166.8 713.1L175.0 714.5L174.0 718.8L165.8 717.4Z" fill="#8a7a50" opacity=".55"/>
<path d="M183.4 705.0L193.7 706.9L190.3 722.2L179.8 720.4Z" fill="#58b4a0"/>
<path d="M188.0 707.2 L185.5 718.6" stroke="#d8efe8" stroke-width="1.1" opacity=".7"/>
<path d="M198.3 707.7L208.4 709.5L205.2 724.7L195.0 723.0Z" fill="#5ab5a1"/>
<path d="M202.9 709.9 L200.5 721.1" stroke="#d8efe8" stroke-width="1.1" opacity=".7"/>
<path d="M212.9 710.3L222.8 712.0L219.8 727.1L209.8 725.4Z" fill="#5bb7a2"/>
<path d="M217.4 712.4 L215.1 723.6" stroke="#d8efe8" stroke-width="1.1" opacity=".7"/>
<path d="M227.2 712.8L236.9 714.5L234.1 729.5L224.3 727.8Z" fill="#4faa95"/>
<path d="M231.6 714.9 L229.5 726.0" stroke="#d8efe8" stroke-width="1.1" opacity=".7"/>
<path d="M241.2 715.3L250.7 717.0L248.1 731.8L238.5 730.2Z" fill="#5bb6a0"/>
<path d="M245.5 717.4 L243.6 728.4" stroke="#d8efe8" stroke-width="1.1" opacity=".7"/>
<path d="M146.7 722.4L157.8 724.2L153.8 740.4L142.6 738.7Z" fill="#3e3c38"/>
<path d="M145.2 733.7L153.8 735.0L152.7 739.4L144.1 738.2Z" fill="#8a7a50" opacity=".55"/>
<path d="M162.7 725.0L173.4 726.7L169.7 742.7L158.8 741.1Z" fill="#2c2a26"/>
<path d="M178.2 727.5L188.8 729.2L185.3 745.1L174.6 743.5Z" fill="#54ae95"/>
<path d="M183.0 729.7 L180.4 741.4" stroke="#d8efe8" stroke-width="1.1" opacity=".7"/>
<path d="M193.5 729.9L203.8 731.6L200.5 747.3L190.1 745.8Z" fill="#64bea4"/>
<path d="M198.1 732.1 L195.7 743.7" stroke="#d8efe8" stroke-width="1.1" opacity=".7"/>
<path d="M208.4 732.4L218.5 734.0L215.4 749.5L205.2 748.0Z" fill="#5cb69c"/>
<path d="M213.0 734.5 L210.6 746.0" stroke="#d8efe8" stroke-width="1.1" opacity=".7"/>
<path d="M223.0 734.7L232.9 736.3L230.0 751.7L220.0 750.2Z" fill="#60baa0"/>
<path d="M227.5 736.8 L225.3 748.2" stroke="#d8efe8" stroke-width="1.1" opacity=".7"/>
<path d="M237.2 737.0L246.9 738.6L244.2 753.8L234.4 752.4Z" fill="#6ac4aa"/>
<path d="M241.7 739.1 L239.6 750.4" stroke="#d8efe8" stroke-width="1.1" opacity=".7"/>
<path d="M140.7 746.1L152.0 747.7L147.9 764.5L136.5 763.0Z" fill="#393733"/>
<path d="M157.0 748.5L168.0 750.0L164.2 766.6L153.0 765.1Z" fill="#35332f"/>
<path d="M172.9 750.7L183.7 752.3L180.1 768.7L169.2 767.3Z" fill="#59b399"/>
<path d="M177.8 752.9 L175.1 765.1" stroke="#d8efe8" stroke-width="1.1" opacity=".7"/>
<path d="M188.5 753.0L199.0 754.5L195.6 770.8L185.0 769.3Z" fill="#5eb89e"/>
<path d="M193.3 755.1 L190.7 767.2" stroke="#d8efe8" stroke-width="1.1" opacity=".7"/>
<path d="M203.7 755.2L214.0 756.7L210.8 772.8L200.4 771.4Z" fill="#68c2a8"/>
<path d="M208.4 757.3 L206.0 769.2" stroke="#d8efe8" stroke-width="1.1" opacity=".7"/>
<path d="M218.6 757.3L228.7 758.8L225.7 774.7L215.5 773.4Z" fill="#68c2a8"/>
<path d="M223.2 759.4 L220.9 771.2" stroke="#d8efe8" stroke-width="1.1" opacity=".7"/>
<path d="M233.2 759.4L243.0 760.8L240.3 776.6L230.3 775.3Z" fill="#60baa0"/>
<path d="M237.7 761.5 L235.6 773.2" stroke="#d8efe8" stroke-width="1.1" opacity=".7"/>
<path d="M287.0 157.0 L287.0 172.0 L-72.9 790 L-82.9 790 Z" fill="url(#bandg)" opacity=".8"/>
<path d="M301 574 L345 560 L345 670 L292 670 Z" fill="#e2cdc6"/>
<rect x="304.0" y="584.0" width="4.2" height="6" fill="#8c736b"/>
<rect x="311.5" y="584.0" width="4.2" height="6" fill="#8c736b"/>
<rect x="319.0" y="584.0" width="4.2" height="6" fill="#8c736b"/>
<rect x="326.5" y="584.0" width="4.2" height="6" fill="#8c736b"/>
<rect x="334.0" y="584.0" width="4.2" height="6" fill="#8c736b"/>
<rect x="341.5" y="584.0" width="4.2" height="6" fill="#8c736b"/>
<rect x="303.2" y="593.0" width="4.2" height="6" fill="#8c736b"/>
<rect x="310.7" y="593.0" width="4.2" height="6" fill="#8c736b"/>
<rect x="318.2" y="593.0" width="4.2" height="6" fill="#8c736b"/>
<rect x="325.7" y="593.0" width="4.2" height="6" fill="#8c736b"/>
<rect x="333.2" y="593.0" width="4.2" height="6" fill="#8c736b"/>
<rect x="340.7" y="593.0" width="4.2" height="6" fill="#8c736b"/>
<rect x="302.4" y="602.0" width="4.2" height="6" fill="#8c736b"/>
<rect x="309.9" y="602.0" width="4.2" height="6" fill="#8c736b"/>
<rect x="317.4" y="602.0" width="4.2" height="6" fill="#8c736b"/>
<rect x="324.9" y="602.0" width="4.2" height="6" fill="#8c736b"/>
<rect x="332.4" y="602.0" width="4.2" height="6" fill="#8c736b"/>
<rect x="339.9" y="602.0" width="4.2" height="6" fill="#8c736b"/>
<rect x="301.6" y="611.0" width="4.2" height="6" fill="#8c736b"/>
<rect x="309.1" y="611.0" width="4.2" height="6" fill="#8c736b"/>
<rect x="316.6" y="611.0" width="4.2" height="6" fill="#8c736b"/>
<rect x="324.1" y="611.0" width="4.2" height="6" fill="#8c736b"/>
<rect x="331.6" y="611.0" width="4.2" height="6" fill="#8c736b"/>
<rect x="339.1" y="611.0" width="4.2" height="6" fill="#8c736b"/>
<rect x="300.8" y="620.0" width="4.2" height="6" fill="#8c736b"/>
<rect x="308.3" y="620.0" width="4.2" height="6" fill="#8c736b"/>
<rect x="315.8" y="620.0" width="4.2" height="6" fill="#8c736b"/>
<rect x="323.3" y="620.0" width="4.2" height="6" fill="#8c736b"/>
<rect x="330.8" y="620.0" width="4.2" height="6" fill="#8c736b"/>
<rect x="338.3" y="620.0" width="4.2" height="6" fill="#8c736b"/>
<rect x="300.0" y="629.0" width="4.2" height="6" fill="#8c736b"/>
<rect x="307.5" y="629.0" width="4.2" height="6" fill="#8c736b"/>
<rect x="315.0" y="629.0" width="4.2" height="6" fill="#8c736b"/>
<rect x="322.5" y="629.0" width="4.2" height="6" fill="#8c736b"/>
<rect x="330.0" y="629.0" width="4.2" height="6" fill="#8c736b"/>
<rect x="337.5" y="629.0" width="4.2" height="6" fill="#8c736b"/>
<rect x="299.2" y="638.0" width="4.2" height="6" fill="#8c736b"/>
<rect x="306.7" y="638.0" width="4.2" height="6" fill="#8c736b"/>
<rect x="314.2" y="638.0" width="4.2" height="6" fill="#8c736b"/>
<rect x="321.7" y="638.0" width="4.2" height="6" fill="#8c736b"/>
<rect x="329.2" y="638.0" width="4.2" height="6" fill="#8c736b"/>
<rect x="336.7" y="638.0" width="4.2" height="6" fill="#8c736b"/>
<rect x="298.4" y="647.0" width="4.2" height="6" fill="#8c736b"/>
<rect x="305.9" y="647.0" width="4.2" height="6" fill="#8c736b"/>
<rect x="313.4" y="647.0" width="4.2" height="6" fill="#8c736b"/>
<rect x="320.9" y="647.0" width="4.2" height="6" fill="#8c736b"/>
<rect x="328.4" y="647.0" width="4.2" height="6" fill="#8c736b"/>
<rect x="335.9" y="647.0" width="4.2" height="6" fill="#8c736b"/>
<rect x="297.6" y="656.0" width="4.2" height="6" fill="#8c736b"/>
<rect x="305.1" y="656.0" width="4.2" height="6" fill="#8c736b"/>
<rect x="312.6" y="656.0" width="4.2" height="6" fill="#8c736b"/>
<rect x="320.1" y="656.0" width="4.2" height="6" fill="#8c736b"/>
<rect x="327.6" y="656.0" width="4.2" height="6" fill="#8c736b"/>
<rect x="335.1" y="656.0" width="4.2" height="6" fill="#8c736b"/>
<rect x="296.8" y="665.0" width="4.2" height="6" fill="#8c736b"/>
<rect x="304.3" y="665.0" width="4.2" height="6" fill="#8c736b"/>
<rect x="311.8" y="665.0" width="4.2" height="6" fill="#8c736b"/>
<rect x="319.3" y="665.0" width="4.2" height="6" fill="#8c736b"/>
<rect x="326.8" y="665.0" width="4.2" height="6" fill="#8c736b"/>
<rect x="334.3" y="665.0" width="4.2" height="6" fill="#8c736b"/>
</g></g></g></svg>
<div id="ide">
<div class="abs" style="left:0;top:0;width:1250px;height:3px;background:#444"></div>
<div id="simbar">
 <span class="t" style="left:12px;top:10.100px;font-size:11px;color:#b9b9b9">iPhone 12/13 mini 100% 16</span>
 <svg class="abs" style="left:148px;top:13px" width="7" height="5" viewBox="0 0 7 5"><path d="M0 0.5h6.4L3.2 4.6z" fill="#bdbdbd"/></svg>
 <span class="t" style="left:178px;top:10.100px;font-size:11px;color:#b9b9b9">热重载 开</span>
 <svg class="abs" style="left:228px;top:13px" width="7" height="5" viewBox="0 0 7 5"><path d="M0 0.5h6.4L3.2 4.6z" fill="#bdbdbd"/></svg>
 <!-- refresh -->
 <svg class="abs" style="left:352px;top:8px" width="16" height="16" viewBox="0 0 16 16" fill="none" stroke="#a9a9a9" stroke-width="1.2" stroke-linecap="round"><path d="M2.6 9.6A5.6 5.6 0 0 1 11.9 4"/><path d="M13.4 6.4A5.6 5.6 0 0 1 4.1 12"/><path d="M12.3 1.6v2.8H9.6"/><path d="M3.7 14.4v-2.8h2.7"/></svg>
 <!-- stop -->
 <svg class="abs" style="left:392px;top:8px" width="16" height="16" viewBox="0 0 16 16"><circle cx="8" cy="8" r="6.3" fill="none" stroke="#b3b3b3" stroke-width="1.2"/><rect x="5.2" y="5.2" width="5.6" height="5.6" rx="1" fill="#b3b3b3"/></svg>
 <!-- phone -->
 <svg class="abs" style="left:432px;top:8px" width="16" height="16" viewBox="0 0 16 16" fill="none" stroke="#b3b3b3" stroke-width="1.2"><rect x="3.8" y="1.4" width="8.4" height="13.2" rx="1.4"/><path d="M6.6 12.4h2.8"/></svg>
 <!-- window -->
 <svg class="abs" style="left:472px;top:8px" width="16" height="16" viewBox="0 0 16 16" fill="none" stroke="#b3b3b3" stroke-width="1.2"><path d="M4.6 5.2V2.6h9.6v7.2h-2.6"/><rect x="1.8" y="5.4" width="9.6" height="7.4"/></svg>
</div>
<div id="phone">
 <div id="list">
<div class="item" style="top:-197px"><div class="pic"><svg width="100" height="100" viewBox="0 0 100 100"><rect width="100" height="100" fill="#cfd8e4"/></svg></div><div class="tt">研学旅行的意义</div><div class="ds">研学旅行是学校教育和校外教育衔接的创新形式，<br>是综合实践育人的有效途径，让孩子们走出校园</div><div class="dt">2025-03-22</div></div>
<div class="item" style="top:20px"><div class="pic"><svg width="100" height="100" viewBox="0 0 100 100"><defs><linearGradient id="t1s" x1="0" y1="0" x2="0" y2="1"><stop offset="0" stop-color="#eceeee"/><stop offset="1" stop-color="#d6dadb"/></linearGradient><filter id="bl1" x="-5%" y="-5%" width="110%" height="110%"><feGaussianBlur stdDeviation="1.100"/></filter></defs>
<rect width="100" height="100" fill="url(#t1s)"/>
<g filter="url(#bl1)">
<rect x="-4" y="46" width="108" height="60" fill="#9c9d97"/>
<path d="M-4 38c5-6 12-8 17-4s6 7 6 14v8H-4z" fill="#4f5f40"/>
<path d="M60 41c12-3 28-3 44 1v12H60z" fill="#616c58"/>
<rect x="22" y="25" width="1.200" height="18" fill="#7f8b88"/>
<path d="M14 42c6-2 12-4 17-8l5-3 6-3 5 3 5 3c6 4 10 6 15 8z" fill="#6f4a3f"/>
<path d="M38 29l4-3 4 3z" fill="#8a3a3a"/>
<path d="M20 42h42v9H20z" fill="#54403a"/>
<path d="M17 42h46v2.500H17z" fill="#9a5a4a"/>
<path d="M62 40h16v3.400H62z" fill="#d59a8f"/>
<path d="M-4 52l25-5 2 59H-4z" fill="#56564f"/>
<path d="M-4 51l25-6v4L-4 56z" fill="#c2c0b0"/>
<path d="M21 52h60l24 54H13z" fill="#a8a8a2"/>
<path d="M80 49l24-7v64H91z" fill="#74746a"/>
<path d="M84 61l20-5M85 71l19-4M87 81l17-3M89 91l15-2" stroke="#a3a396" stroke-width="1.600" fill="none"/>
<ellipse cx="37" cy="57" rx="6" ry="7" fill="#c9c02e"/><ellipse cx="46" cy="55" rx="4.500" ry="5.500" fill="#d3cd48"/><ellipse cx="31" cy="54" rx="3" ry="4" fill="#c8b93a"/><rect x="33" y="63" width="6.500" height="17" fill="#2a2a30"/>
<circle cx="36" cy="49" r="2.600" fill="#cfa38c"/><circle cx="45" cy="48.500" r="2.300" fill="#e4d6c6"/><path d="M33 45l3-2 3 2M42 45l3-2" stroke="#c4423f" stroke-width="1.500" fill="none"/>
<circle cx="24" cy="55" r="3.200" fill="#d6b19a"/><path d="M11 50l11 8" stroke="#e2c2ac" stroke-width="2" fill="none"/><ellipse cx="25" cy="66" rx="5.500" ry="8" fill="#cdc42e"/><path d="M21 72h9l-1 19h-4z" fill="#22222a"/><path d="M22 61l5 2" stroke="#c8373b" stroke-width="2.200" fill="none"/><ellipse cx="22" cy="94" rx="2.200" ry="1.400" fill="#efefef"/>
<circle cx="54" cy="53" r="4.200" fill="#d7ab93"/><path d="M49 50c2-5 9-5 11 0z" fill="#2d2623"/><path d="M55 47l3-8" stroke="#e2bfa8" stroke-width="2.400" fill="none"/><circle cx="58" cy="38" r="1.800" fill="#e7c6b0"/>
<path d="M43 64c2-6 22-7 26 0l-2 8H45z" fill="#d9d127"/><path d="M38 77l9-11" stroke="#e2bfa8" stroke-width="2.600" fill="none"/>
<rect x="49" y="68" width="14" height="12" rx="3" fill="#ecebe6"/><circle cx="53" cy="73" r="1.600" fill="#222"/><circle cx="59" cy="73" r="1.600" fill="#222"/>
<path d="M52 58l3 6 4-6" stroke="#c23a4a" stroke-width="2.200" fill="none"/>
<rect x="48.500" y="78" width="14.500" height="12" rx="3" fill="#b12a3b"/>
<path d="M50 90h11l-1 16h-9z" fill="#93a6ba"/><path d="M45 80l3 13" stroke="#7fc6c0" stroke-width="2.600" fill="none"/>
<path d="M84 62l19-16" stroke="#e2bba2" stroke-width="3" fill="none"/><path d="M58 50l12 12" stroke="#e2bba2" stroke-width="2.600" fill="none"/>
<circle cx="76" cy="57" r="5.200" fill="#d7a58c"/><path d="M70 56c0-8 12-8 12 0-3-3-9-3-12 0z" fill="#2b2422"/>
<path d="M66 66c3-6 19-6 22 0l-1 22H68z" fill="#d4cf2e"/><path d="M72 63l5 6 5-5" stroke="#d9573a" stroke-width="2.200" fill="none"/><path d="M70 70c3 4 8 4 12-1" stroke="#4a9ad0" stroke-width="1.500" fill="none"/><ellipse cx="70" cy="83" rx="3.500" ry="3" fill="#e6e24e"/>
<path d="M65 87h19l1 13H64z" fill="#25252d"/><rect x="67" y="99" width="14" height="6" fill="#b9b7a9"/>
</g></svg></div><div class="tt">岁月无常，好好珍惜</div><div class="ds">常听到这样的话，如果一切可以重新开始，我一<br>定改掉任性，学会坚持，如果有下辈子，我一定</div><div class="dt">2025-03-22</div></div>
<div class="item" style="top:237px"><div class="pic"><svg width="100" height="100" viewBox="0 0 100 100"><defs><linearGradient id="t2g" x1="0" y1="0" x2="0.300" y2="1"><stop offset="0" stop-color="#8d9c36"/><stop offset=".5" stop-color="#77872a"/><stop offset="1" stop-color="#55651c"/></linearGradient><filter id="bl2"><feGaussianBlur stdDeviation="1.600"/></filter></defs>
<rect width="100" height="100" fill="url(#t2g)"/>
<g filter="url(#bl2)"><path d="M20 0l10 0-18 60-8 40h-8z" fill="#5f7a35" opacity=".8"/><path d="M52 0h16l-6 100H46z" fill="#a1ad45" opacity=".75"/><path d="M82 0h12l-14 60 4 40H70z" fill="#8fa03c" opacity=".8"/><path d="M0 0h22L10 30 0 40z" fill="#6e9a6a" opacity=".7"/><path d="M88 0h12v22z" fill="#4f8f7a" opacity=".8"/><path d="M0 60h30l-4 40H0z" fill="#46571a" opacity=".8"/><path d="M32 5l8 0-12 40z" fill="#b6c26a" opacity=".6"/></g>
<g fill="#fdfdf4" font-family="'Liberation Sans','Noto Sans CJK SC',sans-serif" font-weight="bold">
<text x="13" y="38" font-size="31.500" transform="skewX(-10)">研学旅行</text>
<text x="-3" y="60.500" font-size="19.500" font-weight="900">认知</text>
<text x="42" y="58.500" font-size="10">的围墙</text>
<rect x="82" y="52.500" width="20" height="1.200"/>
<text x="29" y="76" font-size="8.500">去抵达</text><text x="58.500" y="77.500" font-size="13.500">另一种</text>
<text x="29" y="93" font-size="8.500">去唤醒</text><text x="58.500" y="95" font-size="13.500">另一个</text>
</g></svg></div><div class="tt">与其背着烦恼活，不如带着美好过</div><div class="ds">一直觉得，感情里，无疾而终并不可怕，可怕的<br>是结束后，你还抱着回忆不肯放;岁月中，失去并</div><div class="dt">2025-03-22</div></div>
<div class="item" style="top:454px"><div class="pic"><svg width="100" height="100" viewBox="0 0 100 100"><defs><linearGradient id="t3g" x1="0" y1="0" x2="0" y2="1"><stop offset="0" stop-color="#63b4ea"/><stop offset=".6" stop-color="#86c6f1"/><stop offset=".8" stop-color="#b9d9f2"/><stop offset="1" stop-color="#dfe7f0"/></linearGradient><filter id="bl3"><feGaussianBlur stdDeviation="2.500"/></filter></defs>
<rect width="100" height="100" fill="url(#t3g)"/>
<g filter="url(#bl3)"><ellipse cx="6" cy="86" rx="12" ry="10" fill="#f2f5f8"/><ellipse cx="90" cy="84" rx="16" ry="12" fill="#dbe6f2"/><ellipse cx="40" cy="100" rx="30" ry="8" fill="#e8eef4"/></g>
<circle cx="76" cy="2.500" r="5" fill="#f5dd3a"/><path d="M68 6l-3 2M72 10l-1 3M80 10l1 3M84 6l3 2" stroke="#f5e46a" stroke-width="1.200"/>
<rect x="10.500" y="16" width="60" height="4.600" rx="2.300" fill="#f4f1a6"/>
<rect x="24.500" y="34.500" width="60" height="4.600" rx="2.300" fill="#f4f1a6"/>
<g fill="#fff" font-family="'Liberation Serif','Noto Serif CJK SC',serif" font-weight="900" font-size="12.500"><text x="14" y="17.500">家长必看</text><text x="20.500" y="35.500">研学是什么</text></g>
<path d="M10 53l12-6 10-10M27 52l11-7 17 17-24-6z" fill="none" stroke="#e8f4fc" stroke-width=".7" stroke-dasharray="1.200 1.200" opacity=".9"/>
<!-- girl -->
<path d="M86 58l6-18" stroke="#f3f3f3" stroke-width="4" stroke-linecap="round"/><rect x="90.500" y="37" width="3" height="6" rx="1" fill="#e3b596"/>
<path d="M68 60c2-5 18-5 21 0l1 15H67z" fill="#f1f1ef"/><path d="M68 60l-2 14" stroke="#e9e9e6" stroke-width="3"/>
<path d="M73 52c0-9 12-9 12 0l1 20c-4 3-10 3-13 0z" fill="#7a4a33"/>
<path d="M69 72h17l4 18c-8 4-18 4-26 0z" fill="#1f3a31"/>
<path d="M70 91h5l-.5 9h-4zM79 91h5l-.5 9h-4z" fill="#e6bfa5"/>
<!-- boy -->
<circle cx="58" cy="81" r="4.300" fill="#2b303c"/><path d="M51 90c1-5 13-5 14 0l1 12H50z" fill="#27385a"/><path d="M52 93h12" stroke="#dfe6ee" stroke-width="2"/>
<rect x="11.500" y="78.500" width="27" height="7.500" rx="3.700" fill="#f3f0a2"/><rect x="10.500" y="91.500" width="20" height="6.500" rx="3.200" fill="#f3f0a2"/>
<g fill="#3a4a3a" font-family="'Liberation Sans','Noto Sans CJK SC',sans-serif" font-weight="bold" font-size="4.500"><text x="14" y="84">自然中的风景</text><text x="13" y="96.500">边学边玩</text></g>
</svg></div><div class="tt">理想很丰满，现实很骨感</div><div class="ds">游戏里的你帅气无比，乘风御剑，通关杀敌无所<br>不能，你满足于那其中的成就感，你满足于通关</div><div class="dt">2025-03-22</div></div>

 </div>
 <div id="nav">
  <div id="notch"></div>
  <span class="t" style="left:10px;top:18px;font-size:12px;font-weight:bold;letter-spacing:-.5px;color:#fff">15:35</span>
  <span class="t" style="left:310px;top:20px;font-size:11px;letter-spacing:-.5px;color:#fff;font-weight:bold">100%</span>
  <svg class="abs" style="left:342px;top:20px" width="26" height="12" viewBox="0 0 26 12"><rect x="0.9" y="0.9" width="20.6" height="9.6" rx="2.4" fill="none" stroke="#fff" stroke-width="1"/><rect x="2.6" y="2.6" width="17.2" height="6.2" rx="1" fill="#fff"/><path d="M22.8 3.8v3.8c1.4-.3 1.4-3.5 0-3.8z" fill="#fff"/></svg>
  <span class="t" style="left:174px;top:62px;font-size:13px;color:#fff">首页</span>
  <div class="abs" style="left:281.5px;top:51.5px;width:86px;height:31px;border-radius:16px;background:rgba(0,0,0,.245);border:.5px solid rgba(255,255,255,.12)"></div>
  <svg class="abs" style="left:281px;top:51px" width="88" height="32" viewBox="0 0 88 32"><circle cx="13.4" cy="16.8" r="2.200" fill="#fff"/><circle cx="22.2" cy="16.8" r="3.3" fill="#fff"/><circle cx="30.4" cy="16.8" r="2.200" fill="#fff"/><path d="M43.4 8v16.4" stroke="rgba(255,255,255,.35)" stroke-width=".8"/><circle cx="64.4" cy="16.8" r="7.6" fill="none" stroke="#fff" stroke-width="2"/><circle cx="64.4" cy="16.8" r="3" fill="#fff"/></svg>
 </div>
 <div class="abs" style="left:367.800px;top:284.500px;width:3px;height:242px;border-radius:1.5px;background:#c2c2c2"></div>
 <div class="abs" style="left:190.5px;top:394.5px;width:25px;height:25px;border-radius:50%;background:radial-gradient(circle,#898989 0,#8b8b8b 55%,rgba(140,140,140,.75) 70%,rgba(140,140,140,.25) 86%,rgba(140,140,140,0) 100%)"></div>
 <div id="tabbar">
  <div class="tab" style="left:0"><svg width="26.400" height="26.400" viewBox="0 0 24 24"><path d="M12 2.6 3.4 8.6v9.6c0 1.7 1.1 2.8 2.8 2.8h11.6c1.7 0 2.8-1.1 2.8-2.8V8.6z" fill="#f2d335" stroke="#94765a" stroke-width="1.5" stroke-linejoin="round"/><rect x="10" y="12.2" width="4" height="4" rx=".8" fill="#c9a21c" stroke="#7d6040" stroke-width="1"/></svg><span style="color:#3b97d8">首页</span></div>
  <div class="tab" style="left:75px"><svg width="26.400" height="26.400" viewBox="0 0 24 24" fill="none" stroke="#808080" stroke-width="1.700"><path d="M19.2 19a10 10 0 1 0-2.6 1.9c1.300.9 2.700 1.100 4.100 1.100-.9-.8-1.400-1.900-1.500-3z" stroke-linejoin="round"/><g fill="#7f7f7f" stroke="none"><circle cx="8.400" cy="12" r="1"/><circle cx="12" cy="12" r="1"/><circle cx="15.600" cy="12" r="1"/></g></svg><span>留言板</span></div>
  <div class="tab" style="left:150px"><svg width="26.400" height="26.400" viewBox="0 0 24 24" fill="none" stroke="#808080" stroke-width="1.700"><rect x="2.6" y="2.6" width="7.6" height="7.6" rx="1"/><rect x="13.8" y="2.6" width="7.600" height="7.6" rx="1"/><rect x="2.6" y="13.800" width="7.6" height="7.600" rx="1"/><rect x="13.800" y="13.8" width="7.6" height="7.6" rx="1"/></svg><span>公告信息</span></div>
  <div class="tab" style="left:225px"><svg width="26.400" height="26.400" viewBox="0 0 24 24" fill="none" stroke="#808080" stroke-width="1.700" stroke-linecap="round" stroke-linejoin="round"><path d="M6.400 21.400h11.800a4.600 4.600 0 0 0 .6-9.150 6 6 0 0 0-11.500-1.100A5.200 5.200 0 0 0 6.400 21.400z"/><path d="M5.200 9.800a4.400 4.400 0 0 1 6.600-4.600" stroke-width="1.200"/><path d="M3.200 5.600l1.200.9M7 2.300l.6 1.400M11.600 1.800l-.3 1.500M2 9.800l1.400-.1" stroke-width="1"/></svg><span>天气</span></div>
  <div class="tab" style="left:300px"><svg width="26.400" height="26.400" viewBox="0 0 24 24" fill="none" stroke="#8a8a8a" stroke-width="1.700"><circle cx="12" cy="7.200" r="5.200"/><rect x="1.600" y="15.800" width="20.800" height="6.400" rx="3.200"/><g fill="#8a8a8a" stroke="none"><circle cx="10.300" cy="7.400" r=".8"/><circle cx="13.700" cy="7.400" r=".8"/></g></svg><span>我的</span></div>
  <div class="abs" style="left:131px;top:67.200px;width:112px;height:5.500px;border-radius:3px;background:#101010"></div>
 </div>
</div>
<div id="simfoot">
 <span class="t" style="left:7px;top:8.5px;font-size:12px;color:#bcbcbc">页面路径</span>
 <svg class="abs" style="left:61px;top:13.500px" width="7" height="5" viewBox="0 0 7 5"><path d="M0 0.5h6.4L3.2 4.600z" fill="#bdbdbd"/></svg>
 <div class="sep" style="left:75px;top:7px;height:15px;background:#555"></div>
 <span class="t" style="left:83px;top:8.500px;font-size:12px;color:#bcbcbc;letter-spacing:.1px">pages/index/index</span>
 <svg class="abs" style="left:187px;top:8px" width="14" height="14" viewBox="0 0 14 14" fill="none" stroke="#b3b3b3" stroke-width="1.100"><rect x="4" y="4" width="8" height="8.400" rx=".6"/><path d="M2 9.600V1.800h7.400"/></svg>
 <svg class="abs" style="left:410px;top:6px" width="17" height="17" viewBox="0 0 17 17" fill="none" stroke="#a9a9a9" stroke-width="1.100" stroke-linecap="round"><ellipse cx="8.500" cy="9.600" rx="3.600" ry="4.600"/><path d="M8.500 5.400v8.600M6.400 5.200a2.100 2.100 0 0 1 4.200 0M4.900 7.800 2.600 6.400M4.800 10H2M5.200 12.400 3 14M12.100 7.800l2.300-1.400M12.200 10H15M11.800 12.400 14 14"/></svg>
 <svg class="abs" style="left:443px;top:7px" width="18" height="14" viewBox="0 0 18 14" fill="none" stroke="#a9a9a9" stroke-width="1.100"><path d="M1.200 7C3 3.800 5.800 2.200 9 2.200S15 3.800 16.800 7C15 10.200 12.200 11.800 9 11.800S3 10.200 1.200 7z"/><circle cx="9" cy="7" r="2.400"/></svg>
 <svg class="abs" style="left:476px;top:13px" width="15" height="4" viewBox="0 0 15 4" fill="#b3b3b3"><circle cx="2" cy="2" r="1.100"/><circle cx="7.500" cy="2" r="1.100"/><circle cx="13" cy="2" r="1.100"/></svg>
</div>

<div id="side">
<div class="abs" style="left:0;top:3px;width:199px;height:30px;background:#363636"></div>
<svg class="abs" style="left:6px;top:8px" width="20" height="20" viewBox="0 0 20 20" fill="none" stroke="#eafaf6" stroke-width="1.300" stroke-linejoin="round"><path d="M7.200 3.200h5l3 3v8.400h-8z"/><path d="M12 3.300v3.100h3"/><path d="M7 6.600H4v10.200h7.600v-2"/></svg>
<svg class="abs" style="left:39px;top:8px" width="20" height="20" viewBox="0 0 20 20" fill="none" stroke="#8f8f8f" stroke-width="1.300"><circle cx="11.600" cy="8" r="4.800"/><path d="M8.300 11.600 2.800 17.400"/></svg>
<svg class="abs" style="left:70px;top:8px" width="20" height="20" viewBox="0 0 20 20" fill="none" stroke="#8f8f8f" stroke-width="1.300"><circle cx="7" cy="4.600" r="2"/><circle cx="7" cy="15.800" r="2"/><circle cx="14" cy="7.600" r="2"/><path d="M7 6.600v7.200M14 9.600c0 3-7 2.200-7 4.200"/></svg>
<svg class="abs" style="left:102px;top:8px" width="20" height="20" viewBox="0 0 20 20" fill="none" stroke="#8f8f8f" stroke-width="1.300"><path d="M3.200 6.800h5.600v5.600H3.200zM3.200 12.400h5.600V18H3.200zM8.800 12.400h5.600V18H8.800zM11.800 3h5.400v5.400h-5.400z"/></svg>
<svg class="abs" style="left:135px;top:8px" width="20" height="20" viewBox="0 0 20 20" fill="none" stroke="#8f8f8f" stroke-width="1.300"><rect x="3.200" y="4.200" width="13.600" height="13" rx=".8"/><path d="M6.600 4.400v4.200h7V4.400M3.400 12.400h7.400v5"/></svg>
<svg class="abs" style="left:165px;top:8px" width="22" height="20" viewBox="0 0 22 20"><path d="M1.500 10.200h12.800c.9-.1 1.600-.5 2-1.200-.6-.9-.5-2.100.2-2.900.9.600 1.300 1.400 1.300 2.300 1-.2 1.900 0 2.700.5-.6 1.200-1.700 1.700-3.100 1.700-1.300 3.800-4.200 5.600-8.300 5.600-4.300 0-6.900-2-7.600-6z" fill="#8f8f8f"/><path d="M4.200 7.400h2.200v2.200H4.200zM6.800 7.400H9v2.200H6.800zM9.400 7.400h2.200v2.200H9.400zM6.800 4.900H9v2.200H6.800zM9.400 4.900h2.200v2.200H9.400zM9.400 2.400h2.200v2.200H9.400z" fill="#8f8f8f"/></svg>
<span class="t" style="left:20px;top:45.800px;font-size:11px;color:#c4c4c4">资源管理器</span>
<svg class="abs" style="left:165px;top:48px" width="16" height="4" viewBox="0 0 16 4" fill="#d0d0d0"><circle cx="2.300" cy="2" r="1.100"/><circle cx="8" cy="2" r="1.100"/><circle cx="13.700" cy="2" r="1.100"/></svg>
<div class="abs" style="left:0;top:68px;width:199px;height:44px;background:#383838"></div>
<div class="abs" style="left:0;top:89.500px;width:199px;height:1px;background:#343434"></div>
<svg class="abs" style="left:6.500px;top:75px" width="8" height="8" viewBox="0 0 8 8"><path d="M1.500 0.500L6 4 1.500 7.500z" fill="#c5c5c5"/></svg>
<span class="t" style="left:20px;top:73.500px;font-size:11px;font-weight:bold;color:#d2d2d2">打开的编辑器</span>
<svg class="abs" style="left:5.500px;top:97.500px" width="8" height="8" viewBox="0 0 8 8"><path d="M0.500 1.800h7L4 6.400z" fill="#c5c5c5"/></svg>
<span class="t" style="left:20px;top:95.500px;font-size:11px;font-weight:bold;color:#d2d2d2;letter-spacing:.2px">MP-WEIXIN</span>
<div class="row" style="top:112px"><svg class="ar" width="8" height="8" viewBox="0 0 8 8"><path d="M1.500 0.500L6 4 1.500 7.500z" fill="#c5c5c5"/></svg><svg class="ic" width="17" height="16" viewBox="0 0 17 16"><path d="M1 3.200c0-.7.500-1.200 1.200-1.200h3.600l1.500 1.600h6.200c.7 0 1.200.5 1.200 1.200v7.400c0 .7-.5 1.200-1.200 1.200H2.200c-.7 0-1.200-.5-1.200-1.200z" fill="#f3c83a"/><rect x="8" y="6.500" width="8" height="8" rx="1" fill="#fdfcf4"/><path d="M10.200 8v5M13.800 8v5M8.800 9.600h6.400M8.800 11.600h6.400" stroke="#e2b93a" stroke-width=".9"/></svg><span class="nm">api</span></div>
<div class="row" style="top:134px"><svg class="ar" width="8" height="8" viewBox="0 0 8 8"><path d="M1.500 0.500L6 4 1.500 7.500z" fill="#c5c5c5"/></svg><svg class="ic" width="17" height="16" viewBox="0 0 17 16"><path d="M1 3.200c0-.7.500-1.200 1.200-1.200h3.600l1.500 1.600h6.200c.7 0 1.200.5 1.200 1.200v7.400c0 .7-.5 1.200-1.200 1.200H2.200c-.7 0-1.200-.5-1.200-1.200z" fill="#90a4ae"/></svg><span class="nm">component</span></div>
<div class="row" style="top:156px"><svg class="ar" width="8" height="8" viewBox="0 0 8 8"><path d="M1.500 0.500L6 4 1.500 7.500z" fill="#c5c5c5"/></svg><svg class="ic" width="17" height="16" viewBox="0 0 17 16"><path d="M1 3.200c0-.7.500-1.200 1.200-1.200h3.600l1.500 1.600h6.200c.7 0 1.200.5 1.200 1.200v7.400c0 .7-.5 1.200-1.200 1.200H2.200c-.7 0-1.200-.5-1.200-1.200z" fill="#90a4ae"/></svg><span class="nm">miniprogram</span></div>
<div class="row" style="top:178px"><svg class="ar" width="8" height="8" viewBox="0 0 8 8"><path d="M1.500 0.500L6 4 1.500 7.500z" fill="#c5c5c5"/></svg><svg class="ic" width="17" height="16" viewBox="0 0 17 16"><path d="M1 3.200c0-.7.500-1.200 1.200-1.200h3.600l1.500 1.600h6.200c.7 0 1.200.5 1.200 1.200v7.400c0 .7-.5 1.200-1.200 1.200H2.200c-.7 0-1.200-.5-1.200-1.200z" fill="#f1593c"/><rect x="8" y="5.500" width="8.500" height="9.500" rx="1.200" fill="#fbd3cb"/><path d="M11.200 9l-1.500 1.400 1.500 1.400M13.300 9l1.500 1.400-1.500 1.400" stroke="#e55a3c" stroke-width=".9" fill="none"/></svg><span class="nm">pages</span></div>
<div class="row" style="top:200px"><svg class="ar" width="8" height="8" viewBox="0 0 8 8"><path d="M1.500 0.500L6 4 1.500 7.500z" fill="#c5c5c5"/></svg><svg class="ic" width="17" height="16" viewBox="0 0 17 16"><path d="M1 3.200c0-.7.500-1.200 1.200-1.200h3.600l1.500 1.600h6.200c.7 0 1.200.5 1.200 1.200v7.400c0 .7-.5 1.200-1.200 1.200H2.200c-.7 0-1.200-.5-1.200-1.200z" fill="#f3c83a"/><rect x="8" y="5.500" width="8.500" height="9.500" rx="1.200" fill="#fdf0b4"/><path d="M9.600 8.200h5.400M9.600 10.200h5.400M9.600 12.200h5.400" stroke="#e9c03a" stroke-width=".9"/></svg><span class="nm">static</span></div>
<div class="row" style="top:222px"><svg class="ar" width="8" height="8" viewBox="0 0 8 8"><path d="M1.500 0.500L6 4 1.500 7.500z" fill="#c5c5c5"/></svg><svg class="ic" width="17" height="16" viewBox="0 0 17 16"><path d="M1 3.200c0-.7.500-1.200 1.200-1.200h3.600l1.500 1.600h6.200c.7 0 1.200.5 1.200 1.200v7.400c0 .7-.5 1.200-1.200 1.200H2.200c-.7 0-1.200-.5-1.200-1.200z" fill="#8bc34a"/><rect x="8.500" y="6.500" width="8" height="8.500" rx="1.200" fill="#e4f3d6"/><rect x="10.300" y="8.500" width="4.400" height="4.400" fill="#8bc34a"/><path d="M12.500 9.300v2.800M11.100 10.700h2.800" stroke="#fff" stroke-width=".9"/></svg><span class="nm">utils</span></div>
<div class="row" style="top:244px"><svg class="ic" width="17" height="16" viewBox="0 0 17 16"><path d="M8.500 1l6.100 3.500v7L8.500 15l-6.100-3.500v-7z" fill="#4b4ba8"/><path d="M8.500 4.400l3.100 1.800v3.600l-3.100 1.800-3.100-1.800V6.200z" fill="#8f90e6"/></svg><span class="nm">.eslintrc.js</span></div>
<div class="row" style="top:266px"><svg class="ic" width="17" height="16" viewBox="0 0 17 16"><rect x="2" y="1.500" width="13" height="13" fill="#f5cf3c"/><text x="5.200" y="13" font-size="6.500" font-weight="bold" font-family="'Liberation Sans',sans-serif" fill="#4a3f10">JS</text></svg><span class="nm">app.js</span></div>
<div class="row" style="top:288px"><svg class="ic" width="17" height="16" viewBox="0 0 17 16" fill="none" stroke="#f0c53a" stroke-width="1.400"><path d="M5.300 2C3.600 2 3.600 3 3.600 4.600s0 3.100-1.800 3.400c1.800.3 1.800 1.800 1.800 3.400S3.600 14 5.300 14"/><path d="M11.700 2c1.700 0 1.700 1 1.700 2.600s0 3.100 1.800 3.400c-1.800.3-1.800 1.800-1.800 3.400s0 2.600-1.700 2.600"/><g fill="#f0c53a" stroke="none"><circle cx="6.500" cy="10.800" r=".8"/><circle cx="8.500" cy="10.800" r=".8"/><circle cx="10.500" cy="10.800" r=".8"/></g></svg><span class="nm">app.json</span></div>
<div class="row" style="top:310px"><svg class="ic" width="17" height="16" viewBox="0 0 17 16"><path d="M3 1.500h12l-1.300 11-4.700 2-4.700-2-.3-2.700h2.300l.1 1.200 2.600 1 2.600-1 .3-2.800H2.500L4 6h8.200l.2-2.200H2.700z" fill="#42a5f5"/></svg><span class="nm">app.wxss</span></div>
<div class="row" style="top:332px"><svg class="ic" width="17" height="16" viewBox="0 0 17 16"><rect x="2" y="1.500" width="13" height="13" fill="#f5cf3c"/><text x="5.200" y="13" font-size="6.500" font-weight="bold" font-family="'Liberation Sans',sans-serif" fill="#4a3f10">JS</text></svg><span class="nm">config.js</span></div>
<div class="row" style="top:354px"><svg class="ic" width="17" height="16" viewBox="0 0 17 16" fill="none" stroke="#f0c53a" stroke-width="1.400"><path d="M5.300 2C3.600 2 3.600 3 3.600 4.600s0 3.100-1.800 3.400c1.800.3 1.800 1.800 1.800 3.400S3.600 14 5.300 14"/><path d="M11.700 2c1.700 0 1.700 1 1.700 2.600s0 3.100 1.800 3.400c-1.800.3-1.800 1.800-1.800 3.400s0 2.600-1.700 2.600"/><g fill="#f0c53a" stroke="none"><circle cx="6.500" cy="10.800" r=".8"/><circle cx="8.500" cy="10.800" r=".8"/><circle cx="10.500" cy="10.800" r=".8"/></g></svg><span class="nm">project.config.json</span></div>
<div class="row" style="top:376px"><svg class="ic" width="17" height="16" viewBox="0 0 17 16" fill="none" stroke="#f0c53a" stroke-width="1.400"><path d="M5.300 2C3.600 2 3.600 3 3.600 4.600s0 3.100-1.800 3.400c1.800.3 1.800 1.800 1.800 3.400S3.600 14 5.300 14"/><path d="M11.700 2c1.700 0 1.700 1 1.700 2.600s0 3.100 1.800 3.400c-1.800.3-1.800 1.800-1.800 3.400s0 2.600-1.700 2.600"/><g fill="#f0c53a" stroke="none"><circle cx="6.500" cy="10.800" r=".8"/><circle cx="8.500" cy="10.800" r=".8"/><circle cx="10.500" cy="10.800" r=".8"/></g></svg><span class="nm" style="letter-spacing:-.3px">project.private.config.js…</span></div>
<div class="row" style="top:398px"><svg class="ic" width="17" height="16" viewBox="0 0 17 16" fill="none" stroke="#f0c53a" stroke-width="1.400"><path d="M5.300 2C3.600 2 3.600 3 3.600 4.600s0 3.100-1.800 3.400c1.800.3 1.800 1.800 1.800 3.400S3.600 14 5.300 14"/><path d="M11.700 2c1.700 0 1.700 1 1.700 2.600s0 3.100 1.800 3.400c-1.800.3-1.800 1.800-1.800 3.400s0 2.600-1.700 2.600"/><g fill="#f0c53a" stroke="none"><circle cx="6.500" cy="10.800" r=".8"/><circle cx="8.500" cy="10.800" r=".8"/><circle cx="10.500" cy="10.800" r=".8"/></g></svg><span class="nm">sitemap.json</span></div>
<div class="abs" style="left:0;top:866px;width:199px;height:22px;background:#383838"></div>
<svg class="abs" style="left:7px;top:873px" width="8" height="8" viewBox="0 0 8 8"><path d="M1.500 0.500L6 4 1.500 7.500z" fill="#c5c5c5"/></svg>
<span class="t" style="left:20px;top:872px;font-size:11px;font-weight:bold;color:#d2d2d2">大纲</span>
<div class="abs" style="left:-1px;top:888px;width:751px;height:23px;background:#3a3a3a;border-left:1px solid #262626"></div>
<svg class="abs" style="left:15px;top:891px" width="13" height="13" viewBox="0 0 13 13" fill="none" stroke="#acacac" stroke-width="1"><circle cx="6.500" cy="6.500" r="5.300"/><path d="M4.400 4.400l4.200 4.200M8.600 4.400 4.400 8.600"/></svg>
<span class="t" style="left:31px;top:891.500px;font-size:12px;color:#b0b0b0">0</span>
<svg class="abs" style="left:42.500px;top:891px" width="14" height="13" viewBox="0 0 14 13" fill="none" stroke="#acacac" stroke-width="1" stroke-linejoin="round"><path d="M7 1.300 12.800 11.700H1.200z"/><path d="M7 4.800v3.600M7 9.400v1"/></svg>
<span class="t" style="left:59px;top:891.500px;font-size:12px;color:#b0b0b0">0</span>
</div>
<div id="dbg">
 <div class="abs" style="left:-1px;top:3px;width:4px;height:885px;background:#2a2a2a"></div>
 <div class="hl" style="top:73px;background:#444"></div>
 <div class="abs" style="left:0;top:74px;width:549px;height:29px;background:#323232"></div>
 <span class="t" style="left:20px;top:83.500px;font-size:11px;color:#e8e8e8">调试器</span>
 <div class="abs" style="left:20px;top:102px;width:33px;height:1px;background:#e0e0e0"></div>
 <div class="abs" style="left:61px;top:80.500px;width:28px;height:17.500px;border-radius:9px;background:#4b4b4b"></div>
 <span class="t" style="left:61px;width:28px;text-align:center;top:84px;font-size:11px;color:#f2f2f2">139</span>
 <span class="t" style="left:108.500px;top:83.500px;font-size:11px;color:#979797">问题</span>
 <span class="t" style="left:151px;top:83.500px;font-size:11px;color:#979797">输出</span>
 <span class="t" style="left:193px;top:83.500px;font-size:11px;color:#979797">终端</span>
 <span class="t" style="left:235px;top:83.500px;font-size:11px;color:#979797">代码质量</span>
 <svg class="abs" style="left:484px;top:86px" width="12" height="8" viewBox="0 0 12 8" fill="none" stroke="#d6d6d6" stroke-width="1.200"><path d="M1 6.500 6 1.700l5 4.800"/></svg>
 <svg class="abs" style="left:517px;top:86px" width="10" height="10" viewBox="0 0 10 10" fill="none" stroke="#d6d6d6" stroke-width="1.200"><path d="M.8.800l8.400 8.400M9.200.8.800 9.200"/></svg>
 <!-- devtools tab bar -->
 <div class="abs" style="left:0;top:103px;width:549px;height:26px;background:#292a2d"></div>
 <div class="hl" style="top:128.500px;background:#474747"></div>
 <svg class="abs" style="left:9px;top:109px" width="16" height="16" viewBox="0 0 16 16"><path d="M6.400 11.600H2.200V2.200h10.400v4" fill="none" stroke="#9a9a9a" stroke-width="1.300"/><path d="M6.600 6l7.400 3-3 1.100 2.600 2.900-1.300 1.200-2.600-3-1.600 2.600z" fill="#9a9a9a"/></svg>
 <div class="sep" style="left:34px;top:108px;height:16px;background:#454545"></div>
 <div class="abs" style="left:41px;top:103px;width:54px;height:25.500px;background:#000"></div>
 <span class="t dt12" style="left:53px;top:111px;color:#f1f1f1">Wxml</span>
 <span class="t dt12" style="left:106.500px;top:111px;letter-spacing:-.2px">Console</span>
 <span class="t dt12" style="left:172.500px;top:111px;letter-spacing:-.2px">Sources</span>
 <span class="t dt12" style="left:237.500px;top:111px;letter-spacing:.15px">Network</span>
 <svg class="abs" style="left:303px;top:112px" width="11" height="9" viewBox="0 0 11 9" fill="none" stroke="#c4c4c4" stroke-width="1.200"><path d="M1 .8 4.800 4.500 1 8.200M5.800.8l3.800 3.700-3.800 3.700"/></svg>
 <svg class="abs" style="left:386px;top:110.500px" width="12" height="11" viewBox="0 0 12 11"><path d="M6 .6 11.600 10.400H.4z" fill="#f2cf3a"/><path d="M5.400 3.800h1.200v3.400H5.400zM5.400 8h1.200v1.200H5.400z" fill="#fff"/></svg>
 <span class="t dt12" style="left:401.500px;top:111px;color:#e8e8e8;letter-spacing:-.4px">139</span>
 <svg class="abs" style="left:424px;top:111px" width="11" height="10" viewBox="0 0 11 10"><path d="M.8.600h9.600v6.600H4L.8 9.600z" fill="#3b82e6"/><path d="M2.800 2.600h5.600v1H2.800zM2.800 4.600h3.400v1H2.800z" fill="#a9cbff"/></svg>
 <span class="t dt12" style="left:438px;top:111px;color:#e8e8e8;letter-spacing:-.4px">23</span>
 <div class="sep" style="left:457px;top:108px;height:16px;background:#454545"></div>
 <svg class="abs" style="left:468px;top:108px" width="16" height="16" viewBox="0 0 16 16"><path d="M13.300 8.700c0-.2.100-.5.100-.7s0-.5-.1-.7l1.500-1.200c.1-.1.200-.3.100-.5l-1.400-2.400c-.1-.2-.3-.2-.5-.2l-1.800.7c-.4-.3-.8-.5-1.200-.7l-.3-1.900c0-.2-.2-.3-.4-.3H6.700c-.2 0-.4.100-.4.300l-.3 1.900c-.4.200-.8.400-1.200.7l-1.800-.7c-.2-.1-.4 0-.5.200L1.100 5.600c-.1.200-.1.400.1.500l1.500 1.200c0 .2-.1.500-.1.700s0 .5.100.7l-1.500 1.200c-.1.100-.2.300-.1.500l1.400 2.400c.1.200.3.200.5.200l1.800-.7c.4.300.8.500 1.200.7l.3 1.900c0 .2.200.3.400.3h2.800c.2 0 .4-.1.400-.3l.3-1.900c.4-.2.800-.4 1.200-.7l1.800.7c.2.100.4 0 .5-.2l1.400-2.400c.1-.2.100-.4-.1-.5zM8 10.500a2.500 2.500 0 1 1 0-5 2.500 2.500 0 0 1 0 5z" fill="#9e9e9e"/></svg>
 <svg class="abs" style="left:502px;top:109px" width="5" height="15" viewBox="0 0 5 15" fill="#9e9e9e"><circle cx="2.500" cy="2.500" r="1.400"/><circle cx="2.500" cy="7.500" r="1.400"/><circle cx="2.500" cy="12.500" r="1.400"/></svg>
 <svg class="abs" style="left:524px;top:109px" width="17" height="15" viewBox="0 0 17 15" fill="none" stroke="#9e9e9e" stroke-width="1.700"><path d="M5.200 1h11v8.200h-11z"/><path d="M3.400 4.400H1v9.200h11.400v-2.200" stroke-width="1.500"/><path d="M5.200 2h11" stroke-width="2.400"/></svg>
 <!-- elements tree -->
 <div class="abs" style="left:0;top:129px;width:549px;height:206px;background:#242424"></div>
 <span class="t mono" style="left:14px;top:136.700px;font-size:11px;color:#5db0d7">&lt;page&gt;</span>
 <svg class="abs" style="left:17px;top:153.500px" width="7" height="8" viewBox="0 0 7 8"><path d="M.800.600 6 4 .800 7.400z" fill="#9a9a9a"/></svg>
 <span class="t mono" style="left:25.700px;top:153.700px;font-size:11px;color:#5db0d7">&lt;view <span style="color:#9bbbdc">class</span>=<span style="color:#ccc">"</span><span style="color:#f29766">index-container</span><span style="color:#ccc">"</span>&gt;<span style="color:#ddd">…</span>&lt;/view&gt;</span>
 <span class="t mono" style="left:14px;top:170.700px;font-size:11px;color:#5db0d7">&lt;/page&gt;</span>
 <div class="hl" style="top:335px;background:#444"></div>
 <div class="abs" style="left:0;top:336px;width:549px;height:22px;background:#242424"></div>
 <div class="hl" style="top:358px;background:#444"></div>
 <!-- styles pane -->
 <div class="abs" style="left:0;top:359px;width:549px;height:52px;background:#292a2d"></div>
 <div class="abs" style="left:0;top:359px;width:50px;height:26px;background:#000"></div>
 <div class="hl" style="top:385px;background:#454545"></div>
 <span class="t dt12" style="left:9.500px;top:367px;color:#f1f1f1;letter-spacing:-.3px">Styles</span>
 <span class="t dt12" style="left:59.500px;top:367px">Computed</span>
 <span class="t dt12" style="left:135.500px;top:367px;letter-spacing:-.1px">Dataset</span>
 <span class="t dt12" style="left:195.500px;top:367px">Component Data</span>
 <span class="t dt12" style="left:305.500px;top:367px;letter-spacing:-.2px">Scope Data</span>
 <div class="abs" style="left:4px;top:389px;width:472px;height:20px;background:#242424"></div>
 <span class="t dt12" style="left:7px;top:394px;color:#8c8c8c">Filter</span>
 <span class="t mono" style="left:487px;top:393.500px;font-size:11px;font-weight:bold;color:#d8d8d8">.cls</span>
 <svg class="abs" style="left:527px;top:394px" width="10" height="10" viewBox="0 0 10 10" stroke="#6e6e6e" stroke-width="1.200"><path d="M5 .5v9M.500 5h9"/></svg>
 <svg class="abs" style="left:538px;top:403px" width="5" height="5" viewBox="0 0 5 5"><path d="M5 0v5H0z" fill="#6e6e6e"/></svg>
 <div class="abs" style="left:0;top:411px;width:549px;height:272px;background:#242424"></div>
 <!-- console drawer -->
 <div class="hl" style="top:683px;background:#484848"></div>
 <div class="abs" style="left:0;top:684px;width:549px;height:54px;background:#292a2d"></div>
 <div class="hl" style="top:710px;background:#454545"></div>
 <div class="hl" style="top:738px;background:#454545"></div>
 <svg class="abs" style="left:14px;top:691px" width="4" height="14" viewBox="0 0 4 14" fill="#a0a0a0"><circle cx="2" cy="2" r="1.300"/><circle cx="2" cy="7" r="1.300"/><circle cx="2" cy="12" r="1.300"/></svg>
 <div class="abs" style="left:28px;top:684px;width:62px;height:26px;background:#000"></div>
 <span class="t dt12" style="left:37.500px;top:691.500px;color:#f1f1f1;letter-spacing:-.15px">Console</span>
 <span class="t dt12" style="left:99.500px;top:691.500px;letter-spacing:-.2px">Task</span>
 <svg class="abs" style="left:527px;top:692px" width="10" height="10" viewBox="0 0 10 10" fill="none" stroke="#b4b4b4" stroke-width="1.300"><path d="M.8.800l8.400 8.400M9.200.8.800 9.200"/></svg>
 <svg class="abs" style="left:8px;top:717px" width="16" height="14" viewBox="0 0 16 14" fill="none" stroke="#9a9a9a" stroke-width="1.200"><rect x="1" y="1.200" width="14" height="11.600"/><path d="M4.400 1.200v11.600"/><path d="M7.400 4.200 11.600 7l-4.200 2.800z" fill="#9a9a9a" stroke="none"/></svg>
 <svg class="abs" style="left:37px;top:717px" width="14" height="14" viewBox="0 0 14 14" fill="none" stroke="#9a9a9a" stroke-width="1.500"><circle cx="7" cy="7" r="5.600"/><path d="M3.100 3.100l7.800 7.800"/></svg>
 <div class="sep" style="left:60px;top:716px;height:16px;background:#484848"></div>
 <span class="t dt12" style="left:72px;top:718.500px;letter-spacing:-.15px">appservice (#3)</span>
 <svg class="abs" style="left:193px;top:721px" width="8" height="7" viewBox="0 0 8 7"><path d="M.4.600h7.200L4 6.600z" fill="#9a9a9a"/></svg>
 <div class="sep" style="left:209px;top:716px;height:16px;background:#484848"></div>
 <svg class="abs" style="left:219px;top:718px" width="18" height="12" viewBox="0 0 18 12"><path d="M9 .8C5.200.8 2.200 3 .8 6c1.400 3 4.400 5.200 8.200 5.200s6.800-2.200 8.200-5.200C15.800 3 12.800.8 9 .8zm0 8.600a3.400 3.400 0 1 1 0-6.800 3.400 3.400 0 0 1 0 6.800zM9 4a2 2 0 1 0 0 4 2 2 0 0 0 0-4z" fill="#9a9a9a"/></svg>
 <div class="sep" style="left:244px;top:716px;height:16px;background:#484848"></div>
 <div class="abs" style="left:253px;top:714px;width:98.500px;height:20px;background:#242424;border:1px solid #4d4d4d"></div>
 <span class="t dt12" style="left:258px;top:719px;color:#c8c8c8">Filter</span>
 <span class="t dt12" style="left:359.500px;top:718.500px">Default levels</span>
 <svg class="abs" style="left:434.500px;top:721px" width="8" height="7" viewBox="0 0 8 7"><path d="M.4.600h7.200L4 6.600z" fill="#9a9a9a"/></svg>
 <div class="sep" style="left:454px;top:716px;height:16px;background:#484848"></div>
 <span class="t dt12" style="left:466px;top:718.500px;color:#9a9a9a">6 hidden</span>
 <svg class="abs" style="left:524px;top:716px" width="16" height="16" viewBox="0 0 16 16"><path d="M13.300 8.700c0-.2.100-.5.100-.7s0-.5-.1-.7l1.500-1.200c.1-.1.200-.3.100-.5l-1.400-2.400c-.1-.2-.3-.2-.5-.2l-1.800.7c-.4-.3-.8-.5-1.200-.7l-.3-1.900c0-.2-.2-.3-.4-.3H6.700c-.2 0-.4.100-.4.300l-.3 1.900c-.4.200-.8.400-1.200.7l-1.800-.7c-.2-.1-.4 0-.5.200L1.100 5.600c-.1.200-.1.400.1.500l1.500 1.200c0 .2-.1.500-.1.700s0 .5.100.7l-1.500 1.200c-.1.100-.2.300-.1.500l1.400 2.400c.1.200.3.200.5.200l1.800-.7c.4.300.8.500 1.200.7l.3 1.900c0 .2.200.3.400.3h2.800c.2 0 .4-.1.400-.3l.3-1.900c.4-.2.800-.4 1.200-.7l1.800.7c.2.100.4 0 .5-.2l1.400-2.400c.1-.2.100-.4-.1-.5zM8 10.500a2.500 2.500 0 1 1 0-5 2.500 2.500 0 0 1 0 5z" fill="#9e9e9e"/></svg>
 <!-- messages -->
 <div class="abs" style="left:0;top:739px;width:549px;height:144px;background:#242424"></div>
 <div class="abs" style="left:534px;top:739px;width:15px;height:144px;background:#2b2b2b"></div>
 <div class="abs" style="left:534px;top:866px;width:15px;height:17px;background:#3a3a3a"></div>
 <div class="abs" style="left:0;top:739px;width:534px;height:26px;background:#332b00;border-bottom:1px solid #665500"></div>
 <div class="abs" style="left:13px;top:739px;width:1px;height:25px;background:#7d7040"></div>
 <span class="t mono" style="left:37.700px;top:734.600px;font-size:11px;line-height:14px;color:#f0e6c4;white-space:pre">component: pages/login/login. Please make sure that  handler has been
defined in pages/login/login.</span>
 <svg class="abs" style="left:11px;top:771px" width="8" height="7" viewBox="0 0 8 7"><path d="M.4.600h7.200L4 6.600z" fill="#9a9a9a"/></svg>
 <span class="t mono" style="left:23.700px;top:768px;font-size:11px;line-height:14px;font-weight:bold;color:#e6e6e6;white-space:pre">Sat Mar 22 2025 15:35:30
GMT+0800 (<span style="font-size:13px;line-height:1">中国标准时间</span>) <span style="font-size:13px;line-height:1">事件警告</span></span>
 <span class="t mono" style="left:241.400px;top:768px;font-size:11px;line-height:14px;color:#d0d0d0;text-decoration:underline">WASubContext.js?t=we…28496001&amp;v=2.19.4:2</span>
 <div class="abs" style="left:0;top:798px;width:534px;height:48px;background:#332b00;border-top:1px solid #665500;border-bottom:1px solid #665500"></div>
 <div class="abs" style="left:13px;top:799px;width:1px;height:46px;background:#7d7040"></div>
 <svg class="abs" style="left:20px;top:803.500px" width="11" height="10" viewBox="0 0 11 10"><path d="M5.500.4 10.800 9.600H.200z" fill="#f2cf3a"/><path d="M4.950 3.300h1.100v3.200h-1.100zM4.950 7.300h1.100v1.100h-1.100z" fill="#fff"/></svg>
 <svg class="abs" style="left:38.500px;top:805px" width="7" height="8" viewBox="0 0 7 8"><path d="M.8.800 5.600 4 .8 7.200z" fill="#8a8a8a"/></svg>
 <span class="t mono" style="left:47.600px;top:802.200px;font-size:11px;line-height:14px;color:#f0e6c4;white-space:pre">Do not have  handler in</span>
 <span class="t mono" style="left:37.700px;top:816.200px;font-size:11px;line-height:14px;color:#f0e6c4;white-space:pre">component: pages/login/login. Please make sure that  handler has been
defined in pages/login/login.</span>
 <span class="t mono" style="left:241.400px;top:802.200px;font-size:11px;line-height:14px;color:#d0d0d0;text-decoration:underline">WASubContext.js?t=we…28496001&amp;v=2.19.4:2</span>
 <div class="abs" style="left:0;top:883px;width:549px;height:28px;background:#3a3a3a"></div>
 <svg class="abs" style="left:9px;top:852px" width="6" height="9" viewBox="0 0 6 9" fill="none" stroke="#3b78e7" stroke-width="1.400"><path d="M1 1l3.600 3.500L1 8"/></svg>
</div>

</div>
</body>
</html>
